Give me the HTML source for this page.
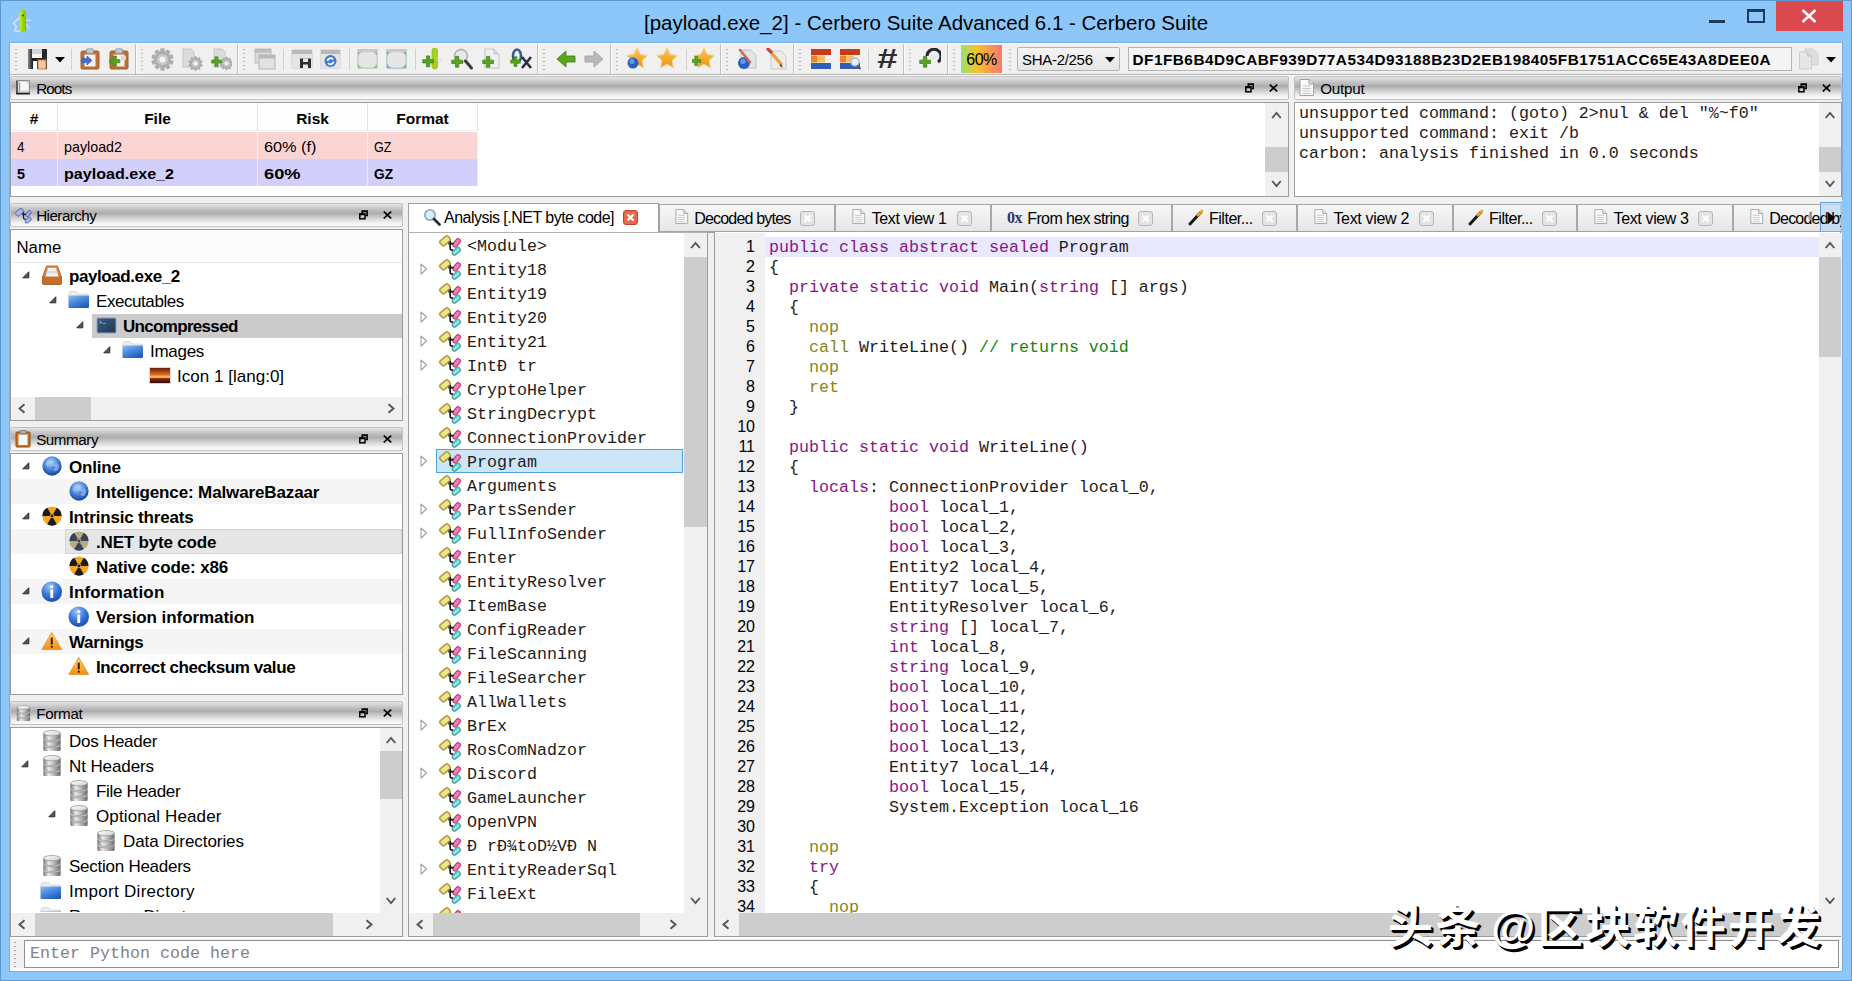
<!DOCTYPE html>
<html><head><meta charset="utf-8"><title>[payload.exe_2] - Cerbero Suite Advanced 6.1 - Cerbero Suite</title>
<style>
*{box-sizing:border-box;margin:0;padding:0}
html,body{width:1852px;height:981px;overflow:hidden}
body{background:#8dc7fa;font-family:"Liberation Sans",sans-serif;font-size:15px;color:#000;position:relative}
.abs{position:absolute}
.win{position:absolute;left:10px;top:43px;width:1832px;height:928px;background:#f0f0f0;outline:1px solid #7aaee2;border-top:1px solid #fafcff}
.dt{position:absolute;height:24px;border:1px solid #c2c2c2;border-radius:2px;background:linear-gradient(#e6e6e6 0%,#c8c8c8 20%,#acacac 42%,#d2d2d2 64%,#f2f2f2 86%,#fbfbfb 100%);font-size:15.200px;line-height:22.500px;white-space:nowrap}
.dt span{position:absolute;left:25.200px;top:1px}
.frame{position:absolute;background:#fff;border:1px solid #9c9c9c;overflow:hidden}
.sb{position:absolute;background:#f0f0f0}
.th{position:absolute;background:#cdcdcd}
.row{position:absolute;white-space:nowrap}
.mono{font-family:"Liberation Mono",monospace;font-size:16.67px;white-space:pre}
.mono{color:#1c1c1c}.kw{color:#861686}.op{color:#868616}.cm{color:#128612}
</style></head>
<body>
<div class="abs" style="left:0;top:0;width:1852px;height:981px;border:1px solid #5e97d2"></div>
<div class="abs" id="title" style="left:0;top:9px;width:1852px;text-align:center;font-size:20.5px;line-height:28px;white-space:nowrap">[payload.exe_2] - Cerbero Suite Advanced 6.1 - Cerbero Suite</div>
<svg class="abs" style="left:11px;top:8px" width="24" height="26" viewBox="0 0 24 26"><path d="M9 9L2.500 15.500l3 3-2 4 5.500 1" fill="none" stroke="#dfe9f4" stroke-width="1.500" opacity=".9"/><path d="M15 12.500l5-.5M15 16l3.500 4.500" stroke="#e6eef8" stroke-width="1.100" opacity=".85"/><defs><linearGradient id="apg" x1="0" x2="1"><stop offset="0" stop-color="#c4e83c"/><stop offset=".5" stop-color="#9cd800"/><stop offset="1" stop-color="#86bc00"/></linearGradient></defs><rect x="8.700" y="2" width="6.400" height="22" rx="3.200" fill="url(#apg)"/><circle cx="12" cy="7.500" r="1.100" fill="#3c5200"/></svg>
<div class="abs" style="left:1709px;top:20px;width:16px;height:3px;background:#1c3a5c"></div>
<div class="abs" style="left:1747px;top:9px;width:18px;height:14px;border:2px solid #1c3a5c;border-top-width:3px"></div>
<div class="abs" style="left:1776px;top:1px;width:67px;height:30px;background:#d9494f"></div>
<svg class="abs" style="left:1801px;top:9px" width="16" height="14" viewBox="0 0 16 14"><path d="M1.500 1l13 12M14.500 1l-13 12" stroke="#fff" stroke-width="2.600"/></svg>
<div class="win"></div>
<div class="abs" style="left:10px;top:74px;width:1832px;height:1px;background:#b4b4b4"></div>
<div class="abs" style="left:10px;top:75px;width:1832px;height:1px;background:#fdfdfd"></div>
<div class="abs" style="left:15px;top:47px;width:2px;height:25px;background:repeating-linear-gradient(#f0f0f0 0 2px,#b4b4b4 2px 3.500px,#f0f0f0 3.500px 4px)"></div>
<div class="abs" style="left:141px;top:47px;width:2px;height:25px;background:repeating-linear-gradient(#f0f0f0 0 2px,#b4b4b4 2px 3.500px,#f0f0f0 3.500px 4px)"></div>
<div class="abs" style="left:243px;top:47px;width:2px;height:25px;background:repeating-linear-gradient(#f0f0f0 0 2px,#b4b4b4 2px 3.500px,#f0f0f0 3.500px 4px)"></div>
<div class="abs" style="left:543px;top:47px;width:2px;height:25px;background:repeating-linear-gradient(#f0f0f0 0 2px,#b4b4b4 2px 3.500px,#f0f0f0 3.500px 4px)"></div>
<div class="abs" style="left:616px;top:47px;width:2px;height:25px;background:repeating-linear-gradient(#f0f0f0 0 2px,#b4b4b4 2px 3.500px,#f0f0f0 3.500px 4px)"></div>
<div class="abs" style="left:726px;top:47px;width:2px;height:25px;background:repeating-linear-gradient(#f0f0f0 0 2px,#b4b4b4 2px 3.500px,#f0f0f0 3.500px 4px)"></div>
<div class="abs" style="left:799px;top:47px;width:2px;height:25px;background:repeating-linear-gradient(#f0f0f0 0 2px,#b4b4b4 2px 3.500px,#f0f0f0 3.500px 4px)"></div>
<div class="abs" style="left:909px;top:47px;width:2px;height:25px;background:repeating-linear-gradient(#f0f0f0 0 2px,#b4b4b4 2px 3.500px,#f0f0f0 3.500px 4px)"></div>
<div class="abs" style="left:953px;top:47px;width:2px;height:25px;background:repeating-linear-gradient(#f0f0f0 0 2px,#b4b4b4 2px 3.500px,#f0f0f0 3.500px 4px)"></div>
<div class="abs" style="left:1009px;top:47px;width:2px;height:25px;background:repeating-linear-gradient(#f0f0f0 0 2px,#b4b4b4 2px 3.500px,#f0f0f0 3.500px 4px)"></div>
<div class="abs" style="left:135px;top:44px;width:1px;height:30px;background:#c0c0c0"></div><div class="abs" style="left:136px;top:44px;width:1px;height:30px;background:#fcfcfc"></div>
<div class="abs" style="left:237px;top:44px;width:1px;height:30px;background:#c0c0c0"></div><div class="abs" style="left:238px;top:44px;width:1px;height:30px;background:#fcfcfc"></div>
<div class="abs" style="left:537px;top:44px;width:1px;height:30px;background:#c0c0c0"></div><div class="abs" style="left:538px;top:44px;width:1px;height:30px;background:#fcfcfc"></div>
<div class="abs" style="left:610px;top:44px;width:1px;height:30px;background:#c0c0c0"></div><div class="abs" style="left:611px;top:44px;width:1px;height:30px;background:#fcfcfc"></div>
<div class="abs" style="left:720px;top:44px;width:1px;height:30px;background:#c0c0c0"></div><div class="abs" style="left:721px;top:44px;width:1px;height:30px;background:#fcfcfc"></div>
<div class="abs" style="left:793px;top:44px;width:1px;height:30px;background:#c0c0c0"></div><div class="abs" style="left:794px;top:44px;width:1px;height:30px;background:#fcfcfc"></div>
<div class="abs" style="left:903px;top:44px;width:1px;height:30px;background:#c0c0c0"></div><div class="abs" style="left:904px;top:44px;width:1px;height:30px;background:#fcfcfc"></div>
<div class="abs" style="left:947px;top:44px;width:1px;height:30px;background:#c0c0c0"></div><div class="abs" style="left:948px;top:44px;width:1px;height:30px;background:#fcfcfc"></div>
<div class="abs" style="left:71px;top:49px;width:1px;height:21px;background:#d0d0d0"></div>
<div class="abs" style="left:283px;top:49px;width:1px;height:21px;background:#d0d0d0"></div>
<div class="abs" style="left:349px;top:49px;width:1px;height:21px;background:#d0d0d0"></div>
<div class="abs" style="left:415px;top:49px;width:1px;height:21px;background:#d0d0d0"></div>
<div class="abs" style="left:686px;top:49px;width:1px;height:21px;background:#d0d0d0"></div>
<div class="abs" style="left:868px;top:49px;width:1px;height:21px;background:#d0d0d0"></div>
<svg class="abs" style="left:27px;top:48px" width="21" height="22" viewBox="0 0 21 22"><defs><linearGradient id="flp" x1="0" x2="1"><stop offset="0" stop-color="#8a8a8a"/><stop offset=".25" stop-color="#1a1a1a"/><stop offset="1" stop-color="#2a2a2a"/></linearGradient></defs><path d="M1 1h19v20H1z" fill="url(#flp)"/><rect x="5" y="1" width="10" height="8" fill="#d4d4d4"/><rect x="5" y="6" width="10" height="4" fill="#f4f4f4"/><rect x="11" y="12" width="8" height="9" fill="#f0c8a8" stroke="#c87a3a" stroke-width="1"/><rect x="6" y="13" width="4" height="8" fill="#fafafa"/></svg>
<svg class="abs" style="left:55px;top:57px" width="10" height="6" viewBox="0 0 10 6"><path d="M0 0h10L5 5.500z" fill="#000"/></svg>
<svg class="abs" style="left:80px;top:48px" width="20" height="22" viewBox="0 0 20 22"><rect x="1" y="3" width="18" height="18" rx="1.500" fill="#b9733a" stroke="#9a5e26"/><rect x="4.500" y="6.500" width="11" height="12" fill="#f4f0ec"/><rect x="6.500" y=".8" width="7" height="4.500" rx="1.200" fill="#c0c8d0" stroke="#8a98a8" stroke-width=".8"/><path d="M2 10.500h5V8l5 4.500-5 4.500v-2.500H2z" fill="#3f6fd6" stroke="#3058b0" stroke-width=".6"/></svg>
<svg class="abs" style="left:109px;top:48px" width="20" height="22" viewBox="0 0 20 22"><rect x="1" y="3" width="18" height="18" rx="1.500" fill="#b9733a" stroke="#9a5e26"/><rect x="4.500" y="6.500" width="11" height="12" fill="#f4f0ec"/><rect x="6.500" y=".8" width="7" height="4.500" rx="1.200" fill="#c0c8d0" stroke="#8a98a8" stroke-width=".8"/><path d="M1 13h5v-5h4.500v5h5v4.500h-5v5h-4.500v-5h-5z" transform="translate(0 2.5) scale(0.7020000000000001)" fill="#58a224" stroke="#3f7f14" stroke-width="1"/><rect x="12" y="8" width="5" height="4" fill="#d8d8d8"/></svg>
<svg class="abs" style="left:151px;top:48px" width="23" height="23" viewBox="0 0 23 23"><rect x="9.3" y="0.29999999999999893" width="4.4" height="5.0" rx="1" fill="#aeaeae" transform="rotate(0 11.5 11.5)"/><rect x="9.3" y="0.29999999999999893" width="4.4" height="5.0" rx="1" fill="#aeaeae" transform="rotate(36 11.5 11.5)"/><rect x="9.3" y="0.29999999999999893" width="4.4" height="5.0" rx="1" fill="#aeaeae" transform="rotate(72 11.5 11.5)"/><rect x="9.3" y="0.29999999999999893" width="4.4" height="5.0" rx="1" fill="#aeaeae" transform="rotate(108 11.5 11.5)"/><rect x="9.3" y="0.29999999999999893" width="4.4" height="5.0" rx="1" fill="#aeaeae" transform="rotate(144 11.5 11.5)"/><rect x="9.3" y="0.29999999999999893" width="4.4" height="5.0" rx="1" fill="#aeaeae" transform="rotate(180 11.5 11.5)"/><rect x="9.3" y="0.29999999999999893" width="4.4" height="5.0" rx="1" fill="#aeaeae" transform="rotate(216 11.5 11.5)"/><rect x="9.3" y="0.29999999999999893" width="4.4" height="5.0" rx="1" fill="#aeaeae" transform="rotate(252 11.5 11.5)"/><rect x="9.3" y="0.29999999999999893" width="4.4" height="5.0" rx="1" fill="#aeaeae" transform="rotate(288 11.5 11.5)"/><rect x="9.3" y="0.29999999999999893" width="4.4" height="5.0" rx="1" fill="#aeaeae" transform="rotate(324 11.5 11.5)"/><circle cx="11.5" cy="11.5" r="8.5" fill="#aeaeae"/><circle cx="11.5" cy="11.5" r="5.5" fill="#c8c8c8"/><circle cx="11.5" cy="11.5" r="3.0" fill="#f4f4f4"/></svg>
<svg class="abs" style="left:182px;top:48px" width="21" height="23" viewBox="0 0 21 23"><path d="M1 1h8l3 3v15H1z" fill="#dcdcdc" stroke="#c4c4c4"/><rect x="12.07" y="8.219999999999999" width="2.86" height="3.25" rx="1" fill="#aeaeae" transform="rotate(0 13.5 15.5)"/><rect x="12.07" y="8.219999999999999" width="2.86" height="3.25" rx="1" fill="#aeaeae" transform="rotate(36 13.5 15.5)"/><rect x="12.07" y="8.219999999999999" width="2.86" height="3.25" rx="1" fill="#aeaeae" transform="rotate(72 13.5 15.5)"/><rect x="12.07" y="8.219999999999999" width="2.86" height="3.25" rx="1" fill="#aeaeae" transform="rotate(108 13.5 15.5)"/><rect x="12.07" y="8.219999999999999" width="2.86" height="3.25" rx="1" fill="#aeaeae" transform="rotate(144 13.5 15.5)"/><rect x="12.07" y="8.219999999999999" width="2.86" height="3.25" rx="1" fill="#aeaeae" transform="rotate(180 13.5 15.5)"/><rect x="12.07" y="8.219999999999999" width="2.86" height="3.25" rx="1" fill="#aeaeae" transform="rotate(216 13.5 15.5)"/><rect x="12.07" y="8.219999999999999" width="2.86" height="3.25" rx="1" fill="#aeaeae" transform="rotate(252 13.5 15.5)"/><rect x="12.07" y="8.219999999999999" width="2.86" height="3.25" rx="1" fill="#aeaeae" transform="rotate(288 13.5 15.5)"/><rect x="12.07" y="8.219999999999999" width="2.86" height="3.25" rx="1" fill="#aeaeae" transform="rotate(324 13.5 15.5)"/><circle cx="13.5" cy="15.5" r="5.5249999999999995" fill="#aeaeae"/><circle cx="13.5" cy="15.5" r="3.575" fill="#c8c8c8"/><circle cx="13.5" cy="15.5" r="1.95" fill="#f4f4f4"/></svg>
<svg class="abs" style="left:211px;top:48px" width="21" height="23" viewBox="0 0 21 23"><path d="M3 1h8l3 3v15H3z" fill="#dcdcdc" stroke="#c4c4c4"/><rect x="14.18" y="8.78" width="2.64" height="3.0" rx="1" fill="#aeaeae" transform="rotate(0 15.5 15.5)"/><rect x="14.18" y="8.78" width="2.64" height="3.0" rx="1" fill="#aeaeae" transform="rotate(36 15.5 15.5)"/><rect x="14.18" y="8.78" width="2.64" height="3.0" rx="1" fill="#aeaeae" transform="rotate(72 15.5 15.5)"/><rect x="14.18" y="8.78" width="2.64" height="3.0" rx="1" fill="#aeaeae" transform="rotate(108 15.5 15.5)"/><rect x="14.18" y="8.78" width="2.64" height="3.0" rx="1" fill="#aeaeae" transform="rotate(144 15.5 15.5)"/><rect x="14.18" y="8.78" width="2.64" height="3.0" rx="1" fill="#aeaeae" transform="rotate(180 15.5 15.5)"/><rect x="14.18" y="8.78" width="2.64" height="3.0" rx="1" fill="#aeaeae" transform="rotate(216 15.5 15.5)"/><rect x="14.18" y="8.78" width="2.64" height="3.0" rx="1" fill="#aeaeae" transform="rotate(252 15.5 15.5)"/><rect x="14.18" y="8.78" width="2.64" height="3.0" rx="1" fill="#aeaeae" transform="rotate(288 15.5 15.5)"/><rect x="14.18" y="8.78" width="2.64" height="3.0" rx="1" fill="#aeaeae" transform="rotate(324 15.5 15.5)"/><circle cx="15.5" cy="15.5" r="5.1" fill="#aeaeae"/><circle cx="15.5" cy="15.5" r="3.3000000000000003" fill="#c8c8c8"/><circle cx="15.5" cy="15.5" r="1.7999999999999998" fill="#f4f4f4"/><path d="M1 13h5v-5h4.500v5h5v4.500h-5v5h-4.500v-5h-5z" transform="translate(0 3.5) scale(0.663)" fill="#58a224" stroke="#3f7f14" stroke-width="1"/></svg>
<svg class="abs" style="left:254px;top:48px" width="22" height="22" viewBox="0 0 22 22"><rect x="1" y="1" width="16" height="14" fill="#dadada" stroke="#bebebe"/><rect x="1" y="1" width="16" height="3.500" fill="#bcbcbc"/><rect x="5" y="7" width="16" height="14" fill="#e2e2e2" stroke="#b4b4b4"/><rect x="5" y="7" width="16" height="3.500" fill="#b8b8b8"/></svg>
<svg class="abs" style="left:291px;top:48px" width="22" height="22" viewBox="0 0 22 22"><rect x="1" y="2" width="20" height="18" fill="#f2f2f2" stroke="#c8c8c8"/><rect x="1" y="2" width="20" height="4" fill="#b8b8b8"/><rect x="1" y="6" width="20" height="14" fill="#e4e4e4"/><path d="M9 10.500h11v9.500H9z" fill="#2e2e2e"/><rect x="12" y="10.500" width="5" height="3.500" fill="#e8e8e8"/><rect x="12" y="16.500" width="5" height="3.500" fill="#e8e8e8"/></svg>
<svg class="abs" style="left:320px;top:48px" width="21" height="22" viewBox="0 0 21 22"><rect x="1" y="2" width="19" height="18" fill="#f2f2f2" stroke="#c8c8c8"/><rect x="1" y="2" width="19" height="4" fill="#b8b8b8"/><rect x="1" y="6" width="19" height="14" fill="#e4e4e4"/><circle cx="10.500" cy="13" r="6" fill="#3f78d4"/><path d="M7.500 13a3 3 0 0 1 5.500-1.500M13.500 13.500a3 3 0 0 1-5.500 1.500" fill="none" stroke="#fff" stroke-width="1.800"/></svg>
<svg class="abs" style="left:357px;top:48px" width="21" height="21" viewBox="0 0 21 21"><rect x=".5" y="1" width="20" height="19.500" fill="#8fc48f"/><rect x=".5" y="1" width="20" height="3" fill="#c8c8c8"/><rect x="1.500" y="4" width="18" height="15.500" rx="5" fill="#e6e6e6" stroke="#d8d8d8"/></svg>
<svg class="abs" style="left:386px;top:48px" width="21" height="21" viewBox="0 0 21 21"><rect x=".5" y="1" width="20" height="19.500" fill="#86aab8"/><rect x=".5" y="1" width="20" height="3" fill="#c8c8c8"/><rect x="1.500" y="4" width="18" height="15.500" rx="5" fill="#e6e6e6" stroke="#d8d8d8"/></svg>
<svg class="abs" style="left:422px;top:48px" width="22" height="23" viewBox="0 0 22 23"><rect x="10" y="0" width="5.500" height="21" rx="2.500" fill="#a8d020" stroke="#88b010" stroke-width=".6"/><path d="M15 10l5 2-4 3" fill="none" stroke="#e0e0e0" stroke-width="1.200"/><path d="M1 13h5v-5h4.500v5h5v4.500h-5v5h-4.500v-5h-5z" transform="translate(0 2.0) scale(0.741)" fill="#58a224" stroke="#3f7f14" stroke-width="1"/></svg>
<svg class="abs" style="left:451px;top:48px" width="23" height="23" viewBox="0 0 23 23"><circle cx="10" cy="8" r="6.500" fill="#e8e8e8" stroke="#b8b8b8" stroke-width="1.800"/><path d="M14.500 13l6 7" stroke="#3a3a3a" stroke-width="3" stroke-linecap="round"/><path d="M1 13h5v-5h4.500v5h5v4.500h-5v5h-4.500v-5h-5z" transform="translate(0 2.5) scale(0.741)" fill="#58a224" stroke="#3f7f14" stroke-width="1"/></svg>
<svg class="abs" style="left:482px;top:48px" width="20" height="23" viewBox="0 0 20 23"><path d="M3 1h9l5 5v14H3z" fill="#f0f0f0" stroke="#c4c4c4"/><path d="M12 1v5h5" fill="#d8d8d8" stroke="#c4c4c4"/><path d="M1 13h5v-5h4.500v5h5v4.500h-5v5h-4.500v-5h-5z" transform="translate(0 2.5) scale(0.741)" fill="#58a224" stroke="#3f7f14" stroke-width="1"/></svg>
<svg class="abs" style="left:510px;top:48px" width="23" height="23" viewBox="0 0 23 23"><ellipse cx="7" cy="8" rx="4" ry="6.500" fill="none" stroke="#3a5a8a" stroke-width="2.600"/><path d="M12 9l9 11M21 9l-9 11" stroke="#2a2a4a" stroke-width="2.600"/><path d="M1 13h5v-5h4.500v5h5v4.500h-5v5h-4.500v-5h-5z" transform="translate(0 3.5) scale(0.663)" fill="#58a224" stroke="#3f7f14" stroke-width="1"/></svg>
<svg class="abs" style="left:556px;top:49px" width="20" height="20" viewBox="0 0 20 20"><path d="M1 10L10 2v5h9v6h-9v5z" fill="#5aa81a" stroke="#3a7a0a" stroke-width=".8"/></svg>
<svg class="abs" style="left:584px;top:49px" width="20" height="20" viewBox="0 0 20 20"><path d="M19 10L10 2v5H1v6h9v5z" fill="#b8b8b8" stroke="#a0a0a0" stroke-width=".8"/></svg>
<svg class="abs" style="left:626px;top:47px" width="23" height="23" viewBox="0 0 23 23"><defs><linearGradient id="stg" x1="0" y1="0" x2="0" y2="1"><stop offset="0" stop-color="#fbc652"/><stop offset="1" stop-color="#ef920e"/></linearGradient></defs><path d="M11 1l3.100 6.600 7.200.9-5.300 5 1.400 7.200L11 17.100 4.600 20.700 6 13.500.7 8.500l7.200-.9z" fill="url(#stg)" stroke="#f3cf8a" stroke-width="1" stroke-linejoin="round"/><circle cx="7" cy="16" r="5.500" fill="#2a60c0"/><circle cx="6" cy="14.500" r="2.500" fill="#6a9ae0"/></svg>
<svg class="abs" style="left:656px;top:47px" width="23" height="23" viewBox="0 0 23 23"><defs><linearGradient id="stg" x1="0" y1="0" x2="0" y2="1"><stop offset="0" stop-color="#fbc652"/><stop offset="1" stop-color="#ef920e"/></linearGradient></defs><path d="M11 1l3.100 6.600 7.200.9-5.300 5 1.400 7.200L11 17.100 4.600 20.700 6 13.500.7 8.500l7.200-.9z" fill="url(#stg)" stroke="#f3cf8a" stroke-width="1" stroke-linejoin="round"/></svg>
<svg class="abs" style="left:692px;top:47px" width="23" height="23" viewBox="0 0 23 23"><g transform="translate(1 0)"><defs><linearGradient id="stg" x1="0" y1="0" x2="0" y2="1"><stop offset="0" stop-color="#fbc652"/><stop offset="1" stop-color="#ef920e"/></linearGradient></defs><path d="M11 1l3.100 6.600 7.200.9-5.300 5 1.400 7.200L11 17.100 4.600 20.700 6 13.500.7 8.500l7.200-.9z" fill="url(#stg)" stroke="#f3cf8a" stroke-width="1" stroke-linejoin="round"/></g><path d="M1 13h5v-5h4.500v5h5v4.500h-5v5h-4.500v-5h-5z" transform="translate(-1 4.5) scale(0.6240000000000001)" fill="#58a224" stroke="#3f7f14" stroke-width="1"/></svg>
<svg class="abs" style="left:737px;top:48px" width="21" height="22" viewBox="0 0 21 22"><path d="M4 2h10l5 5v13H4z" fill="#e4e4e4" stroke="#c0c0c0"/><circle cx="7" cy="15" r="6" fill="#2a60c0"/><circle cx="6" cy="13.500" r="2.600" fill="#6a9ae0"/><path d="M3 2l10 12" stroke="#d06a5a" stroke-width="2.600" stroke-linecap="round"/></svg>
<svg class="abs" style="left:766px;top:48px" width="22" height="22" viewBox="0 0 22 22"><path d="M5 3h10l5 5v13H5z" fill="#ececec" stroke="#c8c8c8"/><path d="M3 2l12 14" stroke="#e8a050" stroke-width="3.400" stroke-linecap="round"/><path d="M2 1l3 3" stroke="#d04a4a" stroke-width="3.400" stroke-linecap="round"/><path d="M15 16l2 3.500-3.500-1.500z" fill="#3a3a3a"/></svg>
<svg class="abs" style="left:810px;top:48px" width="22" height="22" viewBox="0 0 22 22"><rect x="1" y="1" width="20" height="6" fill="#c63a1e"/><rect x="1" y="7.500" width="6" height="7" fill="#ee8422"/><rect x="7" y="7.500" width="8" height="7" fill="#f6bd6a"/><rect x="1" y="15" width="20" height="6" fill="#2f5fb8"/></svg>
<svg class="abs" style="left:839px;top:48px" width="22" height="22" viewBox="0 0 22 22"><rect x="1" y="1" width="20" height="6" fill="#c63a1e"/><rect x="1" y="7.500" width="6" height="7" fill="#ee8422"/><rect x="7" y="7.500" width="8" height="7" fill="#f6bd6a"/><rect x="1" y="15" width="20" height="6" fill="#2f5fb8"/><circle cx="16" cy="14" r="4" fill="#e8f0f8" stroke="#a8b8c8" stroke-width="1.400"/><path d="M18.500 17.500l3 3.500" stroke="#5a5a5a" stroke-width="2"/></svg>
<div class="abs" style="left:875px;top:43px;width:24px;text-align:center;font-size:27px;font-weight:bold;font-style:italic;line-height:32px;color:#303030;transform:scale(1.35,1.05)">#</div>
<svg class="abs" style="left:919px;top:48px" width="22" height="22" viewBox="0 0 22 22"><path d="M19 14a7 7 0 1 0-11-6" fill="none" stroke="#2a2a2a" stroke-width="3"/><ellipse cx="14" cy="9" rx="4" ry="3" fill="#e8e8e8"/><path d="M1 13h5v-5h4.500v5h5v4.500h-5v5h-4.500v-5h-5z" transform="translate(0 2.5) scale(0.741)" fill="#58a224" stroke="#3f7f14" stroke-width="1"/></svg>
<div class="abs" style="left:961px;top:45px;width:41px;height:28px;background:linear-gradient(90deg,#9be070 0%,#f5c22a 40%,#f79a50 70%,#f47a6a 100%);text-align:center;font-size:16px;line-height:29px;letter-spacing:-.5px">60%</div>
<div class="abs" style="left:1017px;top:47px;width:103px;height:24px;background:linear-gradient(#f4f4f4,#e6e6e6);border:1px solid #b4b4b4;border-radius:2px;font-size:15px;line-height:23px;padding-left:4px;letter-spacing:-.3px" id="sha">SHA-2/256</div>
<svg class="abs" style="left:1105px;top:57px" width="10" height="6" viewBox="0 0 10 6"><path d="M0 0h10L5 5.500z" fill="#000"/></svg>
<div class="abs" id="hash" style="left:1128px;top:47px;width:664px;height:24px;background:#f4f4f4;border:1px solid #b4b4b4;font-size:15.300px;font-weight:bold;line-height:23.500px;padding-left:3.500px;white-space:nowrap;letter-spacing:0.517px">DF1FB6B4D9CABF939D77A534D93188B23D2EB198405FB1751ACC65E43A8DEE0A</div>
<svg class="abs" style="left:1798px;top:48px" width="22" height="22" viewBox="0 0 22 22"><path d="M7 1h8l5 5v11H7z" fill="#dedede" stroke="#cfcfcf"/><path d="M1.500 4h8l4 4v13h-12z" fill="#e6e6e6" stroke="#cdcdcd"/><path d="M9.500 4v4h4" fill="#d0d0d0" stroke="#c4c4c4"/></svg>
<svg class="abs" style="left:1826px;top:57px" width="10" height="6" viewBox="0 0 10 6"><path d="M0 0h10L5 5.500z" fill="#000"/></svg>
<div class="dt" style="left:10px;top:76px;width:1279px"><span style="letter-spacing:-0.897px">Roots</span></div>
<svg class="abs" style="left:16px;top:80px" width="14" height="15" viewBox="0 0 14 15"><rect x=".5" y=".5" width="13" height="13" fill="#d4d4d4" stroke="#8c8c8c"/><path d="M4.500 2h5.500l2.500 2.500v6h-8z" fill="#f6f6f6"/><path d="M1 1v12.500" stroke="#4a4a4a" stroke-width="1.600"/><path d="M.2 13.600h13.600" stroke="#1e1e1e" stroke-width="1.800"/><path d="M3.500 3v8" stroke="#9a9a9a" stroke-width="1"/></svg>
<svg class="abs" style="left:1245px;top:83px" width="9" height="10" viewBox="0 0 9 10"><path d="M3.200 3V.9h5v4.600H6.500M3.200 1.400h5" fill="none" stroke="#000" stroke-width="1.500"/><rect x=".8" y="3.800" width="5.200" height="5" fill="none" stroke="#000" stroke-width="1.500"/><path d="M.8 4.500h5.200" stroke="#000" stroke-width="1.500"/></svg><svg class="abs" style="left:1269px;top:84px" width="9" height="8" viewBox="0 0 9 8"><path d="M.8 .6l7.400 6.800M8.200 .6L.8 7.400" stroke="#000" stroke-width="1.700"/></svg>
<div class="dt" style="left:1294px;top:76px;width:548px"><span style="letter-spacing:-0.199px">Output</span></div>
<svg class="abs" style="left:1299px;top:79px" width="16" height="18" viewBox="0 0 16 18"><path d="M1 .5h9l4.500 4.500v11.500H1z" fill="#fafafa" stroke="#a0a0a0" stroke-width="1"/><path d="M10 .5v4.500h4.500" fill="#e0e0e0" stroke="#a0a0a0" stroke-width="1"/><path d="M3.500 7h8M3.500 9.500h8M3.500 12h8M3.500 14.500h8" stroke="#c4c4c4" stroke-width="1"/></svg>
<svg class="abs" style="left:1798px;top:83px" width="9" height="10" viewBox="0 0 9 10"><path d="M3.200 3V.9h5v4.600H6.500M3.200 1.400h5" fill="none" stroke="#000" stroke-width="1.500"/><rect x=".8" y="3.800" width="5.200" height="5" fill="none" stroke="#000" stroke-width="1.500"/><path d="M.8 4.500h5.200" stroke="#000" stroke-width="1.500"/></svg><svg class="abs" style="left:1822px;top:84px" width="9" height="8" viewBox="0 0 9 8"><path d="M.8 .6l7.400 6.800M8.200 .6L.8 7.400" stroke="#000" stroke-width="1.700"/></svg>
<div class="dt" style="left:10px;top:203px;width:393px"><span style="letter-spacing:-0.537px">Hierarchy</span></div>
<svg class="abs" style="left:15px;top:207px" width="18" height="17" viewBox="0 0 18 17"><g transform="scale(.76)"><rect x="0.800" y="3.700" width="10.500" height="6.300" rx="2" transform="rotate(-40 6 6.800)" fill="#a9b8e6" stroke="#6a7cb8" stroke-width="1.500"/><rect x="13.200" y="6.500" width="9" height="4.600" rx="2.200" transform="rotate(-52 17.700 8.800)" fill="#9aaae0" stroke="#6274b4" stroke-width="1.300"/><rect x="12.800" y="15" width="9" height="4.600" rx="2.200" transform="rotate(-40 17.300 17.300)" fill="#a4b6ea" stroke="#6a7cb8" stroke-width="1.300"/><path d="M11.200 7v7.300q0 1.700 1.700 1.700h1.300M9.300 9.600h5.200" fill="none" stroke="#1a1a1a" stroke-width="1.700"/></g></svg>
<svg class="abs" style="left:359px;top:210px" width="9" height="10" viewBox="0 0 9 10"><path d="M3.200 3V.9h5v4.600H6.500M3.200 1.400h5" fill="none" stroke="#000" stroke-width="1.500"/><rect x=".8" y="3.800" width="5.200" height="5" fill="none" stroke="#000" stroke-width="1.500"/><path d="M.8 4.500h5.200" stroke="#000" stroke-width="1.500"/></svg><svg class="abs" style="left:383px;top:211px" width="9" height="8" viewBox="0 0 9 8"><path d="M.8 .6l7.400 6.800M8.200 .6L.8 7.400" stroke="#000" stroke-width="1.700"/></svg>
<div class="dt" style="left:10px;top:427px;width:393px"><span style="letter-spacing:-0.447px">Summary</span></div>
<svg class="abs" style="left:15px;top:430px" width="17" height="18" viewBox="0 0 17 18"><rect x="1" y="2" width="14" height="15" rx="1" fill="#c8742a" stroke="#8a4a14"/><rect x="3.500" y="4.500" width="9" height="10.500" fill="#f8f8f8"/><rect x="5" y=".5" width="6" height="3.500" rx="1" fill="#b0b0b0" stroke="#707070" stroke-width=".8"/></svg>
<svg class="abs" style="left:359px;top:434px" width="9" height="10" viewBox="0 0 9 10"><path d="M3.200 3V.9h5v4.600H6.500M3.200 1.400h5" fill="none" stroke="#000" stroke-width="1.500"/><rect x=".8" y="3.800" width="5.200" height="5" fill="none" stroke="#000" stroke-width="1.500"/><path d="M.8 4.500h5.200" stroke="#000" stroke-width="1.500"/></svg><svg class="abs" style="left:383px;top:435px" width="9" height="8" viewBox="0 0 9 8"><path d="M.8 .6l7.400 6.800M8.200 .6L.8 7.400" stroke="#000" stroke-width="1.700"/></svg>
<div class="dt" style="left:10px;top:701px;width:393px"><span style="letter-spacing:-0.302px">Format</span></div>
<svg class="abs" style="left:15.5px;top:704.5px" width="15" height="16" viewBox="0 0 18 21"><defs><linearGradient id="dbg" x1="0" y1="0" x2="1" y2="0"><stop offset="0" stop-color="#7a7a7a"/><stop offset=".3" stop-color="#ececec"/><stop offset=".55" stop-color="#c4c4c4"/><stop offset="1" stop-color="#6c6c6c"/></linearGradient><linearGradient id="dbt" x1="0" y1="0" x2="1" y2="1"><stop offset="0" stop-color="#ffffff"/><stop offset="1" stop-color="#cfcfcf"/></linearGradient></defs><path d="M.6 15.2v4.600a8.400 2.700 0 0 0 16.800 0v-4.600z" fill="url(#dbg)" stroke="#767676" stroke-width=".5"/><ellipse cx="9" cy="15.2" rx="8.400" ry="2.700" fill="url(#dbt)" stroke="#8c8c8c" stroke-width=".7"/><path d="M.6 9.2v4.600a8.400 2.700 0 0 0 16.800 0v-4.600z" fill="url(#dbg)" stroke="#767676" stroke-width=".5"/><ellipse cx="9" cy="9.2" rx="8.400" ry="2.700" fill="url(#dbt)" stroke="#8c8c8c" stroke-width=".7"/><path d="M.6 3.2v4.600a8.400 2.700 0 0 0 16.800 0v-4.600z" fill="url(#dbg)" stroke="#767676" stroke-width=".5"/><ellipse cx="9" cy="3.2" rx="8.400" ry="2.700" fill="url(#dbt)" stroke="#8c8c8c" stroke-width=".7"/></svg>
<svg class="abs" style="left:359px;top:708px" width="9" height="10" viewBox="0 0 9 10"><path d="M3.200 3V.9h5v4.600H6.500M3.200 1.400h5" fill="none" stroke="#000" stroke-width="1.500"/><rect x=".8" y="3.800" width="5.200" height="5" fill="none" stroke="#000" stroke-width="1.500"/><path d="M.8 4.500h5.200" stroke="#000" stroke-width="1.500"/></svg><svg class="abs" style="left:383px;top:709px" width="9" height="8" viewBox="0 0 9 8"><path d="M.8 .6l7.400 6.800M8.200 .6L.8 7.400" stroke="#000" stroke-width="1.700"/></svg>
<div class="frame" style="left:10px;top:102px;width:1279px;height:95px"></div>
<div class="abs" style="left:11px;top:103px;width:467px;height:28px;background:#fdfdfd;border-bottom:1px solid #ededed"></div>
<div class="abs" style="left:11px;top:103px;width:47px;height:28px;border-right:1px solid #e4e4e4;text-align:center;font-weight:bold;font-size:15.5px;line-height:31.500px">#</div>
<div class="abs" style="left:58px;top:103px;width:200px;height:28px;border-right:1px solid #e4e4e4;text-align:center;font-weight:bold;font-size:15.5px;line-height:31.500px">File</div>
<div class="abs" style="left:258px;top:103px;width:110px;height:28px;border-right:1px solid #e4e4e4;text-align:center;font-weight:bold;font-size:15.5px;line-height:31.500px">Risk</div>
<div class="abs" style="left:368px;top:103px;width:110px;height:28px;border-right:1px solid #e4e4e4;text-align:center;font-weight:bold;font-size:15.5px;line-height:31.500px">Format</div>
<div class="abs" style="left:11px;top:132px;width:467px;height:27px;background:#fbd4d4"></div>
<div class="abs" style="left:11px;top:132px;width:47px;height:27px;border-right:1px solid rgba(255,255,255,.55);padding-left:5.500px;font-weight:normal;font-size:15px;line-height:29.500px;white-space:nowrap"><span style="display:inline-block;transform-origin:0 50%;transform:scaleX(0.8989)">4</span></div>
<div class="abs" style="left:58px;top:132px;width:200px;height:27px;border-right:1px solid rgba(255,255,255,.55);padding-left:5.500px;font-weight:normal;font-size:15px;line-height:29.500px;white-space:nowrap"><span style="display:inline-block;transform-origin:0 50%;transform:scaleX(0.9525)">payload2</span></div>
<div class="abs" style="left:258px;top:132px;width:110px;height:27px;border-right:1px solid rgba(255,255,255,.55);padding-left:5.500px;font-weight:normal;font-size:15px;line-height:29.500px;white-space:nowrap"><span style="display:inline-block;transform-origin:0 50%;transform:scaleX(1.0856)">60% (f)</span></div>
<div class="abs" style="left:368px;top:132px;width:110px;height:27px;border-right:1px solid rgba(255,255,255,.55);padding-left:5.500px;font-weight:normal;font-size:15px;line-height:29.500px;white-space:nowrap"><span style="display:inline-block;transform-origin:0 50%;transform:scaleX(0.8396)">GZ</span></div>
<div class="abs" style="left:11px;top:159px;width:467px;height:27px;background:#d2d0fa"></div>
<div class="abs" style="left:11px;top:159px;width:47px;height:27px;border-right:1px solid rgba(255,255,255,.55);padding-left:5.500px;font-weight:bold;font-size:15px;line-height:29.500px;white-space:nowrap"><span style="display:inline-block;transform-origin:0 50%;transform:scaleX(0.9588)">5</span></div>
<div class="abs" style="left:58px;top:159px;width:200px;height:27px;border-right:1px solid rgba(255,255,255,.55);padding-left:5.500px;font-weight:bold;font-size:15px;line-height:29.500px;white-space:nowrap"><span style="display:inline-block;transform-origin:0 50%;transform:scaleX(1.0725)">payload.exe_2</span></div>
<div class="abs" style="left:258px;top:159px;width:110px;height:27px;border-right:1px solid rgba(255,255,255,.55);padding-left:5.500px;font-weight:bold;font-size:15px;line-height:29.500px;white-space:nowrap"><span style="display:inline-block;transform-origin:0 50%;transform:scaleX(1.2154)">60%</span></div>
<div class="abs" style="left:368px;top:159px;width:110px;height:27px;border-right:1px solid rgba(255,255,255,.55);padding-left:5.500px;font-weight:bold;font-size:15px;line-height:29.500px;white-space:nowrap"><span style="display:inline-block;transform-origin:0 50%;transform:scaleX(0.9115)">GZ</span></div>
<div class="sb" style="left:1265px;top:103px;width:23px;height:93px"></div><div class="th" style="left:1265px;top:147px;width:23px;height:25px"></div><svg class="abs" style="left:1265px;top:103px" width="23" height="93"><polyline points="7.2,15.0 11.5,10.0 15.8,15.0" fill="none" stroke="#555" stroke-width="1.900"/><polyline points="7.2,78.0 11.5,83.0 15.8,78.0" fill="none" stroke="#555" stroke-width="1.900"/></svg>
<div class="frame" style="left:1294px;top:102px;width:548px;height:95px"></div>
<div class="row mono" style="left:1299px;top:104px;line-height:20px">unsupported command: (goto) 2&gt;nul &amp; del &quot;%~f0&quot;</div>
<div class="row mono" style="left:1299px;top:124px;line-height:20px">unsupported command: exit /b</div>
<div class="row mono" style="left:1299px;top:144px;line-height:20px">carbon: analysis finished in 0.0 seconds</div>
<div class="sb" style="left:1819px;top:103px;width:22px;height:93px"></div><div class="th" style="left:1819px;top:147px;width:22px;height:25px"></div><svg class="abs" style="left:1819px;top:103px" width="22" height="93"><polyline points="6.7,15.0 11.0,10.0 15.3,15.0" fill="none" stroke="#555" stroke-width="1.900"/><polyline points="6.7,78.0 11.0,83.0 15.3,78.0" fill="none" stroke="#555" stroke-width="1.900"/></svg>
<div class="frame" style="left:10px;top:229px;width:393px;height:192px"></div>
<div class="abs" style="left:11px;top:230px;width:391px;height:33px;background:#fcfcfc;border-bottom:1px solid #e8e8e8;font-size:16.800px;line-height:36px;padding-left:5.500px">Name</div>
<svg class="abs" style="left:21.5px;top:270.5px" width="8" height="8" viewBox="0 0 8 8"><path d="M6.800 .8V6.800H.8z" fill="#585858" stroke="#2c2c2c" stroke-width="1" stroke-linejoin="round"/></svg>
<svg class="abs" style="left:42px;top:265px" width="20" height="21" viewBox="0 0 20 21"><defs><linearGradient id="trg" x1="0" y1="0" x2="0" y2="1"><stop offset="0" stop-color="#e8964a"/><stop offset="1" stop-color="#b4601e"/></linearGradient></defs><path d="M4.500 1h11l4 11v6.500q0 1-1 1H1.500q-1 0-1-1V12z" fill="url(#trg)" stroke="#a25618" stroke-width=".8"/><path d="M6 3h8l2.500 8.500h-13z" fill="#f6f2ee"/><path d="M5 6h10l.8 2.500H4.200z" fill="#d8dce4"/><path d="M1 12h5l1 2h6l1-2h5v6.500H1z" fill="#c86e26"/></svg>
<div class="row" style="left:69px;top:264px;font-size:17px;font-weight:bold;line-height:25px;letter-spacing:-0.421px">payload.exe_2</div>
<svg class="abs" style="left:48.5px;top:295.5px" width="8" height="8" viewBox="0 0 8 8"><path d="M6.800 .8V6.800H.8z" fill="#585858" stroke="#2c2c2c" stroke-width="1" stroke-linejoin="round"/></svg>
<svg class="abs" style="left:67.5px;top:290px" width="22" height="19" viewBox="0 0 22 19"><path d="M1 3.500q0-2 2-2h5.500l2 2.500h9.500v5H1z" fill="#ececec" stroke="#cfcfcf" stroke-width=".7"/><defs><linearGradient id="fg" x1="0" y1="0" x2=".6" y2="1"><stop offset="0" stop-color="#8fc0f0"/><stop offset=".5" stop-color="#4a8ade"/><stop offset="1" stop-color="#2260b8"/></linearGradient></defs><path d="M.5 5.500h20.500v11.500q0 1-1 1H1.500q-1 0-1-1z" fill="url(#fg)"/></svg>
<div class="row" style="left:96px;top:289px;font-size:17px;font-weight:normal;line-height:25px;letter-spacing:-0.433px">Executables</div>
<div class="abs" style="left:92px;top:313.5px;width:310px;height:24.500px;background:#cbcbcb"></div>
<svg class="abs" style="left:75.5px;top:320.5px" width="8" height="8" viewBox="0 0 8 8"><path d="M6.800 .8V6.800H.8z" fill="#585858" stroke="#2c2c2c" stroke-width="1" stroke-linejoin="round"/></svg>
<svg class="abs" style="left:95.5px;top:317px" width="21" height="17" viewBox="0 0 21 17"><defs><linearGradient id="tg" x1="0" y1="0" x2="1" y2="1"><stop offset="0" stop-color="#3d5f8a"/><stop offset="1" stop-color="#1d3554"/></linearGradient></defs><rect x="1" y="1" width="19" height="15" rx="1" fill="url(#tg)" stroke="#8ea2ba" stroke-width="1"/><path d="M3.500 4l2 1.300-2 1.300M6.500 6.500h3" stroke="#b8c8dc" stroke-width=".7" fill="none"/></svg>
<div class="row" style="left:123px;top:314px;font-size:17px;font-weight:bold;line-height:25px;letter-spacing:-0.684px">Uncompressed</div>
<svg class="abs" style="left:102.5px;top:345.5px" width="8" height="8" viewBox="0 0 8 8"><path d="M6.800 .8V6.800H.8z" fill="#585858" stroke="#2c2c2c" stroke-width="1" stroke-linejoin="round"/></svg>
<svg class="abs" style="left:121.5px;top:340px" width="22" height="19" viewBox="0 0 22 19"><path d="M1 3.500q0-2 2-2h5.500l2 2.500h9.500v5H1z" fill="#ececec" stroke="#cfcfcf" stroke-width=".7"/><defs><linearGradient id="fg" x1="0" y1="0" x2=".6" y2="1"><stop offset="0" stop-color="#8fc0f0"/><stop offset=".5" stop-color="#4a8ade"/><stop offset="1" stop-color="#2260b8"/></linearGradient></defs><path d="M.5 5.500h20.500v11.500q0 1-1 1H1.500q-1 0-1-1z" fill="url(#fg)"/></svg>
<div class="row" style="left:150px;top:339px;font-size:17px;font-weight:normal;line-height:25px;letter-spacing:-0.290px">Images</div>
<svg class="abs" style="left:149px;top:367px" width="22" height="17" viewBox="0 0 22 17"><defs><linearGradient id="sg" x1="0" y1="0" x2="0" y2="1"><stop offset="0" stop-color="#5a1a0a"/><stop offset=".45" stop-color="#e8661a"/><stop offset=".6" stop-color="#ffd07a"/><stop offset=".7" stop-color="#7a2a0a"/><stop offset="1" stop-color="#2a0a05"/></linearGradient></defs><rect x=".5" y=".5" width="21" height="16" fill="url(#sg)" stroke="#d8d8d8" stroke-width="1"/></svg>
<div class="row" style="left:177px;top:364px;font-size:17px;font-weight:normal;line-height:25px;letter-spacing:0.021px">Icon 1 [lang:0]</div>
<div class="sb" style="left:11px;top:397px;width:391px;height:23px"></div><div class="th" style="left:35px;top:397px;width:56px;height:23px"></div><svg class="abs" style="left:11px;top:397px" width="391" height="23"><polyline points="13.5,7.2 8.5,11.5 13.5,15.8" fill="none" stroke="#555" stroke-width="1.900"/><polyline points="377.5,7.2 382.5,11.5 377.5,15.8" fill="none" stroke="#555" stroke-width="1.900"/></svg>
<div class="frame" style="left:10px;top:453px;width:393px;height:242px"></div>
<svg class="abs" style="left:21.5px;top:461.5px" width="8" height="8" viewBox="0 0 8 8"><path d="M6.800 .8V6.800H.8z" fill="#585858" stroke="#2c2c2c" stroke-width="1" stroke-linejoin="round"/></svg>
<svg class="abs" style="left:42px;top:456px" width="20" height="20" viewBox="0 0 22 22"><defs><radialGradient id="gg" cx=".45" cy=".32" r=".75"><stop offset="0" stop-color="#b4d8fa"/><stop offset=".4" stop-color="#5a92e2"/><stop offset=".78" stop-color="#2254b4"/><stop offset="1" stop-color="#143682"/></radialGradient></defs><circle cx="11" cy="11" r="10.600" fill="url(#gg)"/><path d="M5 6q2.500-3 5.500-1.500l.5 3-2.500 1.500-1 3.500-3-2q-1-2.500.5-4.500zM13 9.500l3.500-1.500 2.500 3-1.500 5-3.500 1-1.500-3.500z" fill="#a4ccf6" opacity=".55"/><path d="M11.500 12.500h3" stroke="#1e4a9c" stroke-width="1" opacity=".8"/></svg>
<div class="row" style="left:69px;top:455px;font-size:17px;font-weight:bold;line-height:25px;letter-spacing:-0.201px">Online</div>
<div class="abs" style="left:11px;top:479px;width:391px;height:25px;background:#f5f5f5"></div>
<svg class="abs" style="left:69px;top:481px" width="20" height="20" viewBox="0 0 22 22"><defs><radialGradient id="gg" cx=".45" cy=".32" r=".75"><stop offset="0" stop-color="#b4d8fa"/><stop offset=".4" stop-color="#5a92e2"/><stop offset=".78" stop-color="#2254b4"/><stop offset="1" stop-color="#143682"/></radialGradient></defs><circle cx="11" cy="11" r="10.600" fill="url(#gg)"/><path d="M5 6q2.500-3 5.500-1.500l.5 3-2.500 1.500-1 3.500-3-2q-1-2.500.5-4.500zM13 9.500l3.500-1.500 2.500 3-1.500 5-3.500 1-1.500-3.500z" fill="#a4ccf6" opacity=".55"/><path d="M11.500 12.500h3" stroke="#1e4a9c" stroke-width="1" opacity=".8"/></svg>
<div class="row" style="left:96px;top:480px;font-size:17px;font-weight:bold;line-height:25px;letter-spacing:-0.129px">Intelligence: MalwareBazaar</div>
<svg class="abs" style="left:21.5px;top:511.5px" width="8" height="8" viewBox="0 0 8 8"><path d="M6.800 .8V6.800H.8z" fill="#585858" stroke="#2c2c2c" stroke-width="1" stroke-linejoin="round"/></svg>
<svg class="abs" style="left:42px;top:506px" width="20" height="20" viewBox="0 0 22 22"><circle cx="11" cy="11" r="10.500" fill="#f5a623"/><g transform="rotate(180 11 11)"><path d="M11 11L5.750 1.900A10.500 10.500 0 0 1 16.250 1.900z" fill="#1a1a1a"/><path d="M11 11L21.500 11A10.500 10.500 0 0 1 16.250 20.100z" fill="#1a1a1a" transform="rotate(0 11 11)"/><path d="M11 11L5.750 20.100A10.500 10.500 0 0 1 .5 11z" fill="#1a1a1a"/></g><circle cx="11" cy="11" r="2.600" fill="#f5a623"/><circle cx="11" cy="11" r="1.600" fill="#1a1a1a"/></svg>
<div class="row" style="left:69px;top:505px;font-size:17px;font-weight:bold;line-height:25px;letter-spacing:-0.178px">Intrinsic threats</div>
<div class="abs" style="left:11px;top:529px;width:391px;height:25px;background:#f5f5f5"></div>
<div class="abs" style="left:65px;top:529px;width:337px;height:25px;background:#e6e6e6;border:1px solid #d4d4d4"></div>
<svg class="abs" style="left:69px;top:531px" width="20" height="20" viewBox="0 0 22 22"><circle cx="11" cy="11" r="10.500" fill="#b8a884"/><g transform="rotate(180 11 11)"><path d="M11 11L5.750 1.900A10.500 10.500 0 0 1 16.250 1.900z" fill="#3a4450"/><path d="M11 11L21.500 11A10.500 10.500 0 0 1 16.250 20.100z" fill="#3a4450" transform="rotate(0 11 11)"/><path d="M11 11L5.750 20.100A10.500 10.500 0 0 1 .5 11z" fill="#3a4450"/></g><circle cx="11" cy="11" r="2.600" fill="#b8a884"/><circle cx="11" cy="11" r="1.600" fill="#3a4450"/></svg>
<div class="row" style="left:96px;top:530px;font-size:17px;font-weight:bold;line-height:25px;letter-spacing:-0.178px">.NET byte code</div>
<svg class="abs" style="left:69px;top:556px" width="20" height="20" viewBox="0 0 22 22"><circle cx="11" cy="11" r="10.500" fill="#f5a623"/><g transform="rotate(180 11 11)"><path d="M11 11L5.750 1.900A10.500 10.500 0 0 1 16.250 1.900z" fill="#1a1a1a"/><path d="M11 11L21.500 11A10.500 10.500 0 0 1 16.250 20.100z" fill="#1a1a1a" transform="rotate(0 11 11)"/><path d="M11 11L5.750 20.100A10.500 10.500 0 0 1 .5 11z" fill="#1a1a1a"/></g><circle cx="11" cy="11" r="2.600" fill="#f5a623"/><circle cx="11" cy="11" r="1.600" fill="#1a1a1a"/></svg>
<div class="row" style="left:96px;top:555px;font-size:17px;font-weight:bold;line-height:25px;letter-spacing:-0.126px">Native code: x86</div>
<div class="abs" style="left:11px;top:579px;width:391px;height:25px;background:#f5f5f5"></div>
<svg class="abs" style="left:21.5px;top:586.5px" width="8" height="8" viewBox="0 0 8 8"><path d="M6.800 .8V6.800H.8z" fill="#585858" stroke="#2c2c2c" stroke-width="1" stroke-linejoin="round"/></svg>
<svg class="abs" style="left:41px;top:581px" width="21.500" height="21.500" viewBox="0 0 22 22"><defs><radialGradient id="ig" cx=".4" cy=".25" r=".85"><stop offset="0" stop-color="#9cc4f5"/><stop offset=".55" stop-color="#2f6fd6"/><stop offset="1" stop-color="#1a3fa0"/></radialGradient></defs><circle cx="11" cy="11" r="10.500" fill="url(#ig)"/><circle cx="11" cy="5.800" r="1.700" fill="#fff"/><rect x="9.500" y="8.800" width="3" height="8.500" rx=".5" fill="#fff"/></svg>
<div class="row" style="left:69px;top:580px;font-size:17px;font-weight:bold;line-height:25px;letter-spacing:0.180px">Information</div>
<svg class="abs" style="left:68px;top:606px" width="21.500" height="21.500" viewBox="0 0 22 22"><defs><radialGradient id="ig" cx=".4" cy=".25" r=".85"><stop offset="0" stop-color="#9cc4f5"/><stop offset=".55" stop-color="#2f6fd6"/><stop offset="1" stop-color="#1a3fa0"/></radialGradient></defs><circle cx="11" cy="11" r="10.500" fill="url(#ig)"/><circle cx="11" cy="5.800" r="1.700" fill="#fff"/><rect x="9.500" y="8.800" width="3" height="8.500" rx=".5" fill="#fff"/></svg>
<div class="row" style="left:96px;top:605px;font-size:17px;font-weight:bold;line-height:25px;letter-spacing:-0.069px">Version information</div>
<div class="abs" style="left:11px;top:629px;width:391px;height:25px;background:#f5f5f5"></div>
<svg class="abs" style="left:21.5px;top:636.5px" width="8" height="8" viewBox="0 0 8 8"><path d="M6.800 .8V6.800H.8z" fill="#585858" stroke="#2c2c2c" stroke-width="1" stroke-linejoin="round"/></svg>
<svg class="abs" style="left:41px;top:631px" width="21.500" height="20" viewBox="0 0 22 21"><defs><linearGradient id="wg" x1="0" y1="0" x2="0" y2="1"><stop offset="0" stop-color="#ffd76a"/><stop offset="1" stop-color="#f08a1a"/></linearGradient></defs><path d="M11 1.500L21.500 19.500H.5z" fill="url(#wg)" stroke="#e89a2a" stroke-width="1" stroke-linejoin="round"/><rect x="10" y="7" width="2" height="7" fill="#2a1a00"/><rect x="10" y="15.500" width="2" height="2" fill="#2a1a00"/></svg>
<div class="row" style="left:69px;top:630px;font-size:17px;font-weight:bold;line-height:25px;letter-spacing:-0.290px">Warnings</div>
<svg class="abs" style="left:68px;top:656px" width="21.500" height="20" viewBox="0 0 22 21"><defs><linearGradient id="wg" x1="0" y1="0" x2="0" y2="1"><stop offset="0" stop-color="#ffd76a"/><stop offset="1" stop-color="#f08a1a"/></linearGradient></defs><path d="M11 1.500L21.500 19.500H.5z" fill="url(#wg)" stroke="#e89a2a" stroke-width="1" stroke-linejoin="round"/><rect x="10" y="7" width="2" height="7" fill="#2a1a00"/><rect x="10" y="15.500" width="2" height="2" fill="#2a1a00"/></svg>
<div class="row" style="left:96px;top:655px;font-size:17px;font-weight:bold;line-height:25px;letter-spacing:-0.401px">Incorrect checksum value</div>
<div class="frame" style="left:10px;top:727px;width:393px;height:210px"></div>
<div class="abs" style="left:11px;top:728px;width:368px;height:184px;overflow:hidden" id="fmt">
<svg class="abs" style="left:31.5px;top:2px" width="18" height="21" viewBox="0 0 18 21"><defs><linearGradient id="dbg" x1="0" y1="0" x2="1" y2="0"><stop offset="0" stop-color="#7a7a7a"/><stop offset=".3" stop-color="#ececec"/><stop offset=".55" stop-color="#c4c4c4"/><stop offset="1" stop-color="#6c6c6c"/></linearGradient><linearGradient id="dbt" x1="0" y1="0" x2="1" y2="1"><stop offset="0" stop-color="#ffffff"/><stop offset="1" stop-color="#cfcfcf"/></linearGradient></defs><path d="M.6 15.2v4.600a8.400 2.700 0 0 0 16.800 0v-4.600z" fill="url(#dbg)" stroke="#767676" stroke-width=".5"/><ellipse cx="9" cy="15.2" rx="8.400" ry="2.700" fill="url(#dbt)" stroke="#8c8c8c" stroke-width=".7"/><path d="M.6 9.2v4.600a8.400 2.700 0 0 0 16.800 0v-4.600z" fill="url(#dbg)" stroke="#767676" stroke-width=".5"/><ellipse cx="9" cy="9.2" rx="8.400" ry="2.700" fill="url(#dbt)" stroke="#8c8c8c" stroke-width=".7"/><path d="M.6 3.2v4.600a8.400 2.700 0 0 0 16.800 0v-4.600z" fill="url(#dbg)" stroke="#767676" stroke-width=".5"/><ellipse cx="9" cy="3.2" rx="8.400" ry="2.700" fill="url(#dbt)" stroke="#8c8c8c" stroke-width=".7"/></svg><div class="row" style="left:58px;top:1px;font-size:17px;line-height:25px;letter-spacing:-0.269px">Dos Header</div>
<svg class="abs" style="left:10px;top:32px" width="8" height="8" viewBox="0 0 8 8"><path d="M6.800 .8V6.800H.8z" fill="#585858" stroke="#2c2c2c" stroke-width="1" stroke-linejoin="round"/></svg><svg class="abs" style="left:31.5px;top:27px" width="18" height="21" viewBox="0 0 18 21"><defs><linearGradient id="dbg" x1="0" y1="0" x2="1" y2="0"><stop offset="0" stop-color="#7a7a7a"/><stop offset=".3" stop-color="#ececec"/><stop offset=".55" stop-color="#c4c4c4"/><stop offset="1" stop-color="#6c6c6c"/></linearGradient><linearGradient id="dbt" x1="0" y1="0" x2="1" y2="1"><stop offset="0" stop-color="#ffffff"/><stop offset="1" stop-color="#cfcfcf"/></linearGradient></defs><path d="M.6 15.2v4.600a8.400 2.700 0 0 0 16.800 0v-4.600z" fill="url(#dbg)" stroke="#767676" stroke-width=".5"/><ellipse cx="9" cy="15.2" rx="8.400" ry="2.700" fill="url(#dbt)" stroke="#8c8c8c" stroke-width=".7"/><path d="M.6 9.2v4.600a8.400 2.700 0 0 0 16.800 0v-4.600z" fill="url(#dbg)" stroke="#767676" stroke-width=".5"/><ellipse cx="9" cy="9.2" rx="8.400" ry="2.700" fill="url(#dbt)" stroke="#8c8c8c" stroke-width=".7"/><path d="M.6 3.2v4.600a8.400 2.700 0 0 0 16.800 0v-4.600z" fill="url(#dbg)" stroke="#767676" stroke-width=".5"/><ellipse cx="9" cy="3.2" rx="8.400" ry="2.700" fill="url(#dbt)" stroke="#8c8c8c" stroke-width=".7"/></svg><div class="row" style="left:58px;top:26px;font-size:17px;line-height:25px;letter-spacing:-0.098px">Nt Headers</div>
<svg class="abs" style="left:58.5px;top:52px" width="18" height="21" viewBox="0 0 18 21"><defs><linearGradient id="dbg" x1="0" y1="0" x2="1" y2="0"><stop offset="0" stop-color="#7a7a7a"/><stop offset=".3" stop-color="#ececec"/><stop offset=".55" stop-color="#c4c4c4"/><stop offset="1" stop-color="#6c6c6c"/></linearGradient><linearGradient id="dbt" x1="0" y1="0" x2="1" y2="1"><stop offset="0" stop-color="#ffffff"/><stop offset="1" stop-color="#cfcfcf"/></linearGradient></defs><path d="M.6 15.2v4.600a8.400 2.700 0 0 0 16.800 0v-4.600z" fill="url(#dbg)" stroke="#767676" stroke-width=".5"/><ellipse cx="9" cy="15.2" rx="8.400" ry="2.700" fill="url(#dbt)" stroke="#8c8c8c" stroke-width=".7"/><path d="M.6 9.2v4.600a8.400 2.700 0 0 0 16.800 0v-4.600z" fill="url(#dbg)" stroke="#767676" stroke-width=".5"/><ellipse cx="9" cy="9.2" rx="8.400" ry="2.700" fill="url(#dbt)" stroke="#8c8c8c" stroke-width=".7"/><path d="M.6 3.2v4.600a8.400 2.700 0 0 0 16.800 0v-4.600z" fill="url(#dbg)" stroke="#767676" stroke-width=".5"/><ellipse cx="9" cy="3.2" rx="8.400" ry="2.700" fill="url(#dbt)" stroke="#8c8c8c" stroke-width=".7"/></svg><div class="row" style="left:85px;top:51px;font-size:17px;line-height:25px;letter-spacing:-0.328px">File Header</div>
<svg class="abs" style="left:37px;top:82px" width="8" height="8" viewBox="0 0 8 8"><path d="M6.800 .8V6.800H.8z" fill="#585858" stroke="#2c2c2c" stroke-width="1" stroke-linejoin="round"/></svg><svg class="abs" style="left:58.5px;top:77px" width="18" height="21" viewBox="0 0 18 21"><defs><linearGradient id="dbg" x1="0" y1="0" x2="1" y2="0"><stop offset="0" stop-color="#7a7a7a"/><stop offset=".3" stop-color="#ececec"/><stop offset=".55" stop-color="#c4c4c4"/><stop offset="1" stop-color="#6c6c6c"/></linearGradient><linearGradient id="dbt" x1="0" y1="0" x2="1" y2="1"><stop offset="0" stop-color="#ffffff"/><stop offset="1" stop-color="#cfcfcf"/></linearGradient></defs><path d="M.6 15.2v4.600a8.400 2.700 0 0 0 16.800 0v-4.600z" fill="url(#dbg)" stroke="#767676" stroke-width=".5"/><ellipse cx="9" cy="15.2" rx="8.400" ry="2.700" fill="url(#dbt)" stroke="#8c8c8c" stroke-width=".7"/><path d="M.6 9.2v4.600a8.400 2.700 0 0 0 16.800 0v-4.600z" fill="url(#dbg)" stroke="#767676" stroke-width=".5"/><ellipse cx="9" cy="9.2" rx="8.400" ry="2.700" fill="url(#dbt)" stroke="#8c8c8c" stroke-width=".7"/><path d="M.6 3.2v4.600a8.400 2.700 0 0 0 16.800 0v-4.600z" fill="url(#dbg)" stroke="#767676" stroke-width=".5"/><ellipse cx="9" cy="3.2" rx="8.400" ry="2.700" fill="url(#dbt)" stroke="#8c8c8c" stroke-width=".7"/></svg><div class="row" style="left:85px;top:76px;font-size:17px;line-height:25px;letter-spacing:0.113px">Optional Header</div>
<svg class="abs" style="left:85.5px;top:102px" width="18" height="21" viewBox="0 0 18 21"><defs><linearGradient id="dbg" x1="0" y1="0" x2="1" y2="0"><stop offset="0" stop-color="#7a7a7a"/><stop offset=".3" stop-color="#ececec"/><stop offset=".55" stop-color="#c4c4c4"/><stop offset="1" stop-color="#6c6c6c"/></linearGradient><linearGradient id="dbt" x1="0" y1="0" x2="1" y2="1"><stop offset="0" stop-color="#ffffff"/><stop offset="1" stop-color="#cfcfcf"/></linearGradient></defs><path d="M.6 15.2v4.600a8.400 2.700 0 0 0 16.800 0v-4.600z" fill="url(#dbg)" stroke="#767676" stroke-width=".5"/><ellipse cx="9" cy="15.2" rx="8.400" ry="2.700" fill="url(#dbt)" stroke="#8c8c8c" stroke-width=".7"/><path d="M.6 9.2v4.600a8.400 2.700 0 0 0 16.800 0v-4.600z" fill="url(#dbg)" stroke="#767676" stroke-width=".5"/><ellipse cx="9" cy="9.2" rx="8.400" ry="2.700" fill="url(#dbt)" stroke="#8c8c8c" stroke-width=".7"/><path d="M.6 3.2v4.600a8.400 2.700 0 0 0 16.800 0v-4.600z" fill="url(#dbg)" stroke="#767676" stroke-width=".5"/><ellipse cx="9" cy="3.2" rx="8.400" ry="2.700" fill="url(#dbt)" stroke="#8c8c8c" stroke-width=".7"/></svg><div class="row" style="left:112px;top:101px;font-size:17px;line-height:25px;letter-spacing:-0.058px">Data Directories</div>
<svg class="abs" style="left:31.5px;top:127px" width="18" height="21" viewBox="0 0 18 21"><defs><linearGradient id="dbg" x1="0" y1="0" x2="1" y2="0"><stop offset="0" stop-color="#7a7a7a"/><stop offset=".3" stop-color="#ececec"/><stop offset=".55" stop-color="#c4c4c4"/><stop offset="1" stop-color="#6c6c6c"/></linearGradient><linearGradient id="dbt" x1="0" y1="0" x2="1" y2="1"><stop offset="0" stop-color="#ffffff"/><stop offset="1" stop-color="#cfcfcf"/></linearGradient></defs><path d="M.6 15.2v4.600a8.400 2.700 0 0 0 16.800 0v-4.600z" fill="url(#dbg)" stroke="#767676" stroke-width=".5"/><ellipse cx="9" cy="15.2" rx="8.400" ry="2.700" fill="url(#dbt)" stroke="#8c8c8c" stroke-width=".7"/><path d="M.6 9.2v4.600a8.400 2.700 0 0 0 16.800 0v-4.600z" fill="url(#dbg)" stroke="#767676" stroke-width=".5"/><ellipse cx="9" cy="9.2" rx="8.400" ry="2.700" fill="url(#dbt)" stroke="#8c8c8c" stroke-width=".7"/><path d="M.6 3.2v4.600a8.400 2.700 0 0 0 16.800 0v-4.600z" fill="url(#dbg)" stroke="#767676" stroke-width=".5"/><ellipse cx="9" cy="3.2" rx="8.400" ry="2.700" fill="url(#dbt)" stroke="#8c8c8c" stroke-width=".7"/></svg><div class="row" style="left:58px;top:126px;font-size:17px;line-height:25px;letter-spacing:-0.256px">Section Headers</div>
<svg class="abs" style="left:28.5px;top:153px" width="22" height="19" viewBox="0 0 22 19"><path d="M1 3.500q0-2 2-2h5.500l2 2.500h9.500v5H1z" fill="#ececec" stroke="#cfcfcf" stroke-width=".7"/><defs><linearGradient id="fg" x1="0" y1="0" x2=".6" y2="1"><stop offset="0" stop-color="#8fc0f0"/><stop offset=".5" stop-color="#4a8ade"/><stop offset="1" stop-color="#2260b8"/></linearGradient></defs><path d="M.5 5.500h20.500v11.500q0 1-1 1H1.500q-1 0-1-1z" fill="url(#fg)"/></svg><div class="row" style="left:58px;top:151px;font-size:17px;line-height:25px;letter-spacing:0.299px">Import Directory</div>
<svg class="abs" style="left:28.5px;top:178px" width="22" height="19" viewBox="0 0 22 19"><path d="M1 3.500q0-2 2-2h5.500l2 2.500h9.500v5H1z" fill="#ececec" stroke="#cfcfcf" stroke-width=".7"/><defs><linearGradient id="fg" x1="0" y1="0" x2=".6" y2="1"><stop offset="0" stop-color="#8fc0f0"/><stop offset=".5" stop-color="#4a8ade"/><stop offset="1" stop-color="#2260b8"/></linearGradient></defs><path d="M.5 5.500h20.500v11.500q0 1-1 1H1.500q-1 0-1-1z" fill="url(#fg)"/></svg><div class="row" style="left:58px;top:176px;font-size:17px;line-height:25px;letter-spacing:-0.324px">Resource Directory</div>
</div>
<div class="sb" style="left:380px;top:728px;width:22px;height:185px"></div><div class="th" style="left:380px;top:751px;width:22px;height:48px"></div><svg class="abs" style="left:380px;top:728px" width="22" height="185"><polyline points="6.7,15.0 11.0,10.0 15.3,15.0" fill="none" stroke="#555" stroke-width="1.900"/><polyline points="6.7,170.0 11.0,175.0 15.3,170.0" fill="none" stroke="#555" stroke-width="1.900"/></svg>
<div class="sb" style="left:11px;top:913px;width:369px;height:23px"></div><div class="th" style="left:35px;top:913px;width:298px;height:23px"></div><svg class="abs" style="left:11px;top:913px" width="369" height="23"><polyline points="13.5,7.2 8.5,11.5 13.5,15.8" fill="none" stroke="#555" stroke-width="1.900"/><polyline points="355.5,7.2 360.5,11.5 355.5,15.8" fill="none" stroke="#555" stroke-width="1.900"/></svg>
<div class="sb" style="left:380px;top:913px;width:22px;height:23px"></div>
<div class="abs" style="left:408px;top:232px;width:1433px;height:1px;background:#a0a0a0"></div>
<div class="abs" style="left:408px;top:203px;width:251px;height:30px;background:#fff;border:1px solid #a0a0a0;border-bottom:none"></div>
<svg class="abs" style="left:423px;top:208px" width="18" height="18" viewBox="0 0 18 18"><circle cx="7" cy="7" r="5.200" fill="#d8ecfa" stroke="#8aa8c0" stroke-width="1.600"/><path d="M11 11l5.500 5.500" stroke="#2a2a2a" stroke-width="2.600" stroke-linecap="round"/></svg>
<div class="row" style="left:444px;top:203px;font-size:16px;line-height:29px;letter-spacing:-0.517px">Analysis [.NET byte code]</div>
<svg class="abs" style="left:623px;top:210px" width="15" height="15" viewBox="0 0 15 15"><rect x=".5" y=".5" width="14" height="14" rx="2.500" fill="#e86a4a" stroke="#c0452a"/><path d="M4.500 4.500l6 6M10.500 4.500l-6 6" stroke="#fff" stroke-width="2.200"/></svg>
<div class="abs" style="left:659px;top:204px;width:176px;height:27px;background:linear-gradient(#f6f6f6,#e6e6e6);border:1px solid #a8a8a8;border-bottom:none"></div>
<svg class="abs" style="left:674.5px;top:209px" width="14" height="16" viewBox="0 0 16 18"><path d="M1 .5h9l4.500 4.500v11.500H1z" fill="#fafafa" stroke="#a0a0a0" stroke-width="1"/><path d="M10 .5v4.500h4.500" fill="#e0e0e0" stroke="#a0a0a0" stroke-width="1"/><path d="M3.500 7h8M3.500 9.500h8M3.500 12h8M3.500 14.500h8" stroke="#c4c4c4" stroke-width="1"/></svg>
<div class="row" style="left:694.2px;top:204px;font-size:16px;line-height:29px;letter-spacing:-0.803px">Decoded bytes</div>
<svg class="abs" style="left:800px;top:211px" width="15" height="15" viewBox="0 0 15 15"><rect x=".5" y=".5" width="14" height="14" rx="2.500" fill="#e4e4e4" stroke="#b4b4b4"/><path d="M4.500 4.500l6 6M10.500 4.500l-6 6" stroke="#fff" stroke-width="2.200"/></svg>
<div class="abs" style="left:835px;top:204px;width:156px;height:27px;background:linear-gradient(#f6f6f6,#e6e6e6);border:1px solid #a8a8a8;border-bottom:none"></div>
<svg class="abs" style="left:852px;top:209px" width="14" height="16" viewBox="0 0 16 18"><path d="M1 .5h9l4.500 4.500v11.500H1z" fill="#fafafa" stroke="#a0a0a0" stroke-width="1"/><path d="M10 .5v4.500h4.500" fill="#e0e0e0" stroke="#a0a0a0" stroke-width="1"/><path d="M3.500 7h8M3.500 9.500h8M3.500 12h8M3.500 14.500h8" stroke="#c4c4c4" stroke-width="1"/></svg>
<div class="row" style="left:871.7px;top:204px;font-size:16px;line-height:29px;letter-spacing:-0.384px">Text view 1</div>
<svg class="abs" style="left:957px;top:211px" width="15" height="15" viewBox="0 0 15 15"><rect x=".5" y=".5" width="14" height="14" rx="2.500" fill="#e4e4e4" stroke="#b4b4b4"/><path d="M4.500 4.500l6 6M10.500 4.500l-6 6" stroke="#fff" stroke-width="2.200"/></svg>
<div class="abs" style="left:991px;top:204px;width:181px;height:27px;background:linear-gradient(#f6f6f6,#e6e6e6);border:1px solid #a8a8a8;border-bottom:none"></div>
<div class="row" style="left:1007px;top:204px;font-family:'Liberation Serif',serif;font-weight:bold;color:#2a3a6a;font-size:16px;line-height:28px;letter-spacing:-.5px">0x</div>
<div class="row" style="left:1027.3px;top:204px;font-size:16px;line-height:29px;letter-spacing:-0.639px">From hex string</div>
<svg class="abs" style="left:1138px;top:211px" width="15" height="15" viewBox="0 0 15 15"><rect x=".5" y=".5" width="14" height="14" rx="2.500" fill="#e4e4e4" stroke="#b4b4b4"/><path d="M4.500 4.500l6 6M10.500 4.500l-6 6" stroke="#fff" stroke-width="2.200"/></svg>
<div class="abs" style="left:1172px;top:204px;width:125px;height:27px;background:linear-gradient(#f6f6f6,#e6e6e6);border:1px solid #a8a8a8;border-bottom:none"></div>
<svg class="abs" style="left:1188px;top:208px" width="17" height="18" viewBox="0 0 17 18"><path d="M2 16L13 4" stroke="#1a1a1a" stroke-width="3" stroke-linecap="round"/><path d="M10 7l3-3" stroke="#e8a020" stroke-width="3" stroke-linecap="round"/><path d="M14 1v3M12.500 2.500h3" stroke="#f0c040" stroke-width="1"/></svg>
<div class="row" style="left:1209px;top:204px;font-size:16px;line-height:29px;letter-spacing:-0.477px">Filter...</div>
<svg class="abs" style="left:1262px;top:211px" width="15" height="15" viewBox="0 0 15 15"><rect x=".5" y=".5" width="14" height="14" rx="2.500" fill="#e4e4e4" stroke="#b4b4b4"/><path d="M4.500 4.500l6 6M10.500 4.500l-6 6" stroke="#fff" stroke-width="2.200"/></svg>
<div class="abs" style="left:1297px;top:204px;width:156px;height:27px;background:linear-gradient(#f6f6f6,#e6e6e6);border:1px solid #a8a8a8;border-bottom:none"></div>
<svg class="abs" style="left:1314px;top:209px" width="14" height="16" viewBox="0 0 16 18"><path d="M1 .5h9l4.500 4.500v11.500H1z" fill="#fafafa" stroke="#a0a0a0" stroke-width="1"/><path d="M10 .5v4.500h4.500" fill="#e0e0e0" stroke="#a0a0a0" stroke-width="1"/><path d="M3.500 7h8M3.500 9.500h8M3.500 12h8M3.500 14.500h8" stroke="#c4c4c4" stroke-width="1"/></svg>
<div class="row" style="left:1333.4px;top:204px;font-size:16px;line-height:29px;letter-spacing:-0.314px">Text view 2</div>
<svg class="abs" style="left:1418.5px;top:211px" width="15" height="15" viewBox="0 0 15 15"><rect x=".5" y=".5" width="14" height="14" rx="2.500" fill="#e4e4e4" stroke="#b4b4b4"/><path d="M4.500 4.500l6 6M10.500 4.500l-6 6" stroke="#fff" stroke-width="2.200"/></svg>
<div class="abs" style="left:1453px;top:204px;width:124px;height:27px;background:linear-gradient(#f6f6f6,#e6e6e6);border:1px solid #a8a8a8;border-bottom:none"></div>
<svg class="abs" style="left:1468px;top:208px" width="17" height="18" viewBox="0 0 17 18"><path d="M2 16L13 4" stroke="#1a1a1a" stroke-width="3" stroke-linecap="round"/><path d="M10 7l3-3" stroke="#e8a020" stroke-width="3" stroke-linecap="round"/><path d="M14 1v3M12.500 2.500h3" stroke="#f0c040" stroke-width="1"/></svg>
<div class="row" style="left:1489px;top:204px;font-size:16px;line-height:29px;letter-spacing:-0.464px">Filter...</div>
<svg class="abs" style="left:1541.5px;top:211px" width="15" height="15" viewBox="0 0 15 15"><rect x=".5" y=".5" width="14" height="14" rx="2.500" fill="#e4e4e4" stroke="#b4b4b4"/><path d="M4.500 4.500l6 6M10.500 4.500l-6 6" stroke="#fff" stroke-width="2.200"/></svg>
<div class="abs" style="left:1577px;top:204px;width:156px;height:27px;background:linear-gradient(#f6f6f6,#e6e6e6);border:1px solid #a8a8a8;border-bottom:none"></div>
<svg class="abs" style="left:1593.5px;top:209px" width="14" height="16" viewBox="0 0 16 18"><path d="M1 .5h9l4.500 4.500v11.500H1z" fill="#fafafa" stroke="#a0a0a0" stroke-width="1"/><path d="M10 .5v4.500h4.500" fill="#e0e0e0" stroke="#a0a0a0" stroke-width="1"/><path d="M3.500 7h8M3.500 9.500h8M3.500 12h8M3.500 14.500h8" stroke="#c4c4c4" stroke-width="1"/></svg>
<div class="row" style="left:1613.6px;top:204px;font-size:16px;line-height:29px;letter-spacing:-0.374px">Text view 3</div>
<svg class="abs" style="left:1698.4px;top:211px" width="15" height="15" viewBox="0 0 15 15"><rect x=".5" y=".5" width="14" height="14" rx="2.500" fill="#e4e4e4" stroke="#b4b4b4"/><path d="M4.500 4.500l6 6M10.500 4.500l-6 6" stroke="#fff" stroke-width="2.200"/></svg>
<div class="abs" style="left:1733px;top:204px;width:108px;height:27px;background:linear-gradient(#f6f6f6,#e6e6e6);border:1px solid #a8a8a8;border-bottom:none"></div>
<svg class="abs" style="left:1750px;top:209px" width="14" height="16" viewBox="0 0 16 18"><path d="M1 .5h9l4.500 4.500v11.500H1z" fill="#fafafa" stroke="#a0a0a0" stroke-width="1"/><path d="M10 .5v4.500h4.500" fill="#e0e0e0" stroke="#a0a0a0" stroke-width="1"/><path d="M3.500 7h8M3.500 9.500h8M3.500 12h8M3.500 14.500h8" stroke="#c4c4c4" stroke-width="1"/></svg>
<div class="abs" style="left:1820px;top:202px;width:22px;height:30px;background:rgba(186,216,248,.75);border:1px solid #6a9fd8;border-right-color:#8dc7fa"></div>
<div class="row" style="left:1769.3px;top:204px;font-size:16px;line-height:29px;width:72px;overflow:hidden;letter-spacing:-0.803px">Decoded bytes</div>
<div class="abs" style="left:659px;top:231px;width:1182px;height:1px;background:#a2a2a2"></div>
<div class="abs" style="left:1842px;top:200px;width:9px;height:40px;background:#8dc7fa"></div>
<svg class="abs" style="left:1827px;top:211px" width="10" height="14" viewBox="0 0 10 14"><path d="M1 1l7 6-7 6z" fill="#000"/></svg>
<svg class="abs" style="left:1806px;top:210px" width="7" height="13" viewBox="0 0 7 13"><path d="M6 1L1 6.500l5 5.500z" fill="#a8a8a8" opacity=".85"/></svg>
<div class="frame" style="left:408px;top:232px;width:300px;height:705px;border-top-color:#b0b0b0"></div>
<div class="abs" style="left:409px;top:233px;width:275px;height:680px;overflow:hidden">
<svg class="abs" style="left:30px;top:1px" width="23" height="22" viewBox="0 0 23 22"><rect x="0.800" y="3.700" width="10.500" height="6.300" rx="2" transform="rotate(-40 6 6.800)" fill="#ece47e" stroke="#a89c4a" stroke-width="1.500"/><rect x="13.200" y="6.500" width="9" height="4.600" rx="2.200" transform="rotate(-52 17.700 8.800)" fill="#f084b4" stroke="#b04878" stroke-width="1.300"/><rect x="12.800" y="15" width="9" height="4.600" rx="2.200" transform="rotate(-40 17.300 17.300)" fill="#86e2e4" stroke="#48a4a8" stroke-width="1.300"/><path d="M11.200 7v7.300q0 1.700 1.700 1.700h1.300M9.300 9.600h5.200" fill="none" stroke="#1a1a1a" stroke-width="1.700"/></svg><div class="row mono" style="left:58px;top:1.5px;line-height:24px">&lt;Module&gt;</div>
<svg class="abs" style="left:11px;top:30px" width="8" height="12" viewBox="0 0 8 12"><path d="M1 1l5.500 5L1 11z" fill="#fff" stroke="#a0a0a0" stroke-width="1.100" stroke-linejoin="round"/></svg><svg class="abs" style="left:30px;top:25px" width="23" height="22" viewBox="0 0 23 22"><rect x="0.800" y="3.700" width="10.500" height="6.300" rx="2" transform="rotate(-40 6 6.800)" fill="#ece47e" stroke="#a89c4a" stroke-width="1.500"/><rect x="13.200" y="6.500" width="9" height="4.600" rx="2.200" transform="rotate(-52 17.700 8.800)" fill="#f084b4" stroke="#b04878" stroke-width="1.300"/><rect x="12.800" y="15" width="9" height="4.600" rx="2.200" transform="rotate(-40 17.300 17.300)" fill="#86e2e4" stroke="#48a4a8" stroke-width="1.300"/><path d="M11.200 7v7.300q0 1.700 1.700 1.700h1.300M9.300 9.600h5.200" fill="none" stroke="#1a1a1a" stroke-width="1.700"/></svg><div class="row mono" style="left:58px;top:25.5px;line-height:24px">Entity18</div>
<svg class="abs" style="left:30px;top:49px" width="23" height="22" viewBox="0 0 23 22"><rect x="0.800" y="3.700" width="10.500" height="6.300" rx="2" transform="rotate(-40 6 6.800)" fill="#ece47e" stroke="#a89c4a" stroke-width="1.500"/><rect x="13.200" y="6.500" width="9" height="4.600" rx="2.200" transform="rotate(-52 17.700 8.800)" fill="#f084b4" stroke="#b04878" stroke-width="1.300"/><rect x="12.800" y="15" width="9" height="4.600" rx="2.200" transform="rotate(-40 17.300 17.300)" fill="#86e2e4" stroke="#48a4a8" stroke-width="1.300"/><path d="M11.200 7v7.300q0 1.700 1.700 1.700h1.300M9.300 9.600h5.200" fill="none" stroke="#1a1a1a" stroke-width="1.700"/></svg><div class="row mono" style="left:58px;top:49.5px;line-height:24px">Entity19</div>
<svg class="abs" style="left:11px;top:78px" width="8" height="12" viewBox="0 0 8 12"><path d="M1 1l5.500 5L1 11z" fill="#fff" stroke="#a0a0a0" stroke-width="1.100" stroke-linejoin="round"/></svg><svg class="abs" style="left:30px;top:73px" width="23" height="22" viewBox="0 0 23 22"><rect x="0.800" y="3.700" width="10.500" height="6.300" rx="2" transform="rotate(-40 6 6.800)" fill="#ece47e" stroke="#a89c4a" stroke-width="1.500"/><rect x="13.200" y="6.500" width="9" height="4.600" rx="2.200" transform="rotate(-52 17.700 8.800)" fill="#f084b4" stroke="#b04878" stroke-width="1.300"/><rect x="12.800" y="15" width="9" height="4.600" rx="2.200" transform="rotate(-40 17.300 17.300)" fill="#86e2e4" stroke="#48a4a8" stroke-width="1.300"/><path d="M11.200 7v7.300q0 1.700 1.700 1.700h1.300M9.300 9.600h5.200" fill="none" stroke="#1a1a1a" stroke-width="1.700"/></svg><div class="row mono" style="left:58px;top:73.5px;line-height:24px">Entity20</div>
<svg class="abs" style="left:11px;top:102px" width="8" height="12" viewBox="0 0 8 12"><path d="M1 1l5.500 5L1 11z" fill="#fff" stroke="#a0a0a0" stroke-width="1.100" stroke-linejoin="round"/></svg><svg class="abs" style="left:30px;top:97px" width="23" height="22" viewBox="0 0 23 22"><rect x="0.800" y="3.700" width="10.500" height="6.300" rx="2" transform="rotate(-40 6 6.800)" fill="#ece47e" stroke="#a89c4a" stroke-width="1.500"/><rect x="13.200" y="6.500" width="9" height="4.600" rx="2.200" transform="rotate(-52 17.700 8.800)" fill="#f084b4" stroke="#b04878" stroke-width="1.300"/><rect x="12.800" y="15" width="9" height="4.600" rx="2.200" transform="rotate(-40 17.300 17.300)" fill="#86e2e4" stroke="#48a4a8" stroke-width="1.300"/><path d="M11.200 7v7.300q0 1.700 1.700 1.700h1.300M9.300 9.600h5.200" fill="none" stroke="#1a1a1a" stroke-width="1.700"/></svg><div class="row mono" style="left:58px;top:97.5px;line-height:24px">Entity21</div>
<svg class="abs" style="left:11px;top:126px" width="8" height="12" viewBox="0 0 8 12"><path d="M1 1l5.500 5L1 11z" fill="#fff" stroke="#a0a0a0" stroke-width="1.100" stroke-linejoin="round"/></svg><svg class="abs" style="left:30px;top:121px" width="23" height="22" viewBox="0 0 23 22"><rect x="0.800" y="3.700" width="10.500" height="6.300" rx="2" transform="rotate(-40 6 6.800)" fill="#ece47e" stroke="#a89c4a" stroke-width="1.500"/><rect x="13.200" y="6.500" width="9" height="4.600" rx="2.200" transform="rotate(-52 17.700 8.800)" fill="#f084b4" stroke="#b04878" stroke-width="1.300"/><rect x="12.800" y="15" width="9" height="4.600" rx="2.200" transform="rotate(-40 17.300 17.300)" fill="#86e2e4" stroke="#48a4a8" stroke-width="1.300"/><path d="M11.200 7v7.300q0 1.700 1.700 1.700h1.300M9.300 9.600h5.200" fill="none" stroke="#1a1a1a" stroke-width="1.700"/></svg><div class="row mono" style="left:58px;top:121.5px;line-height:24px">IntÐ tr</div>
<svg class="abs" style="left:30px;top:145px" width="23" height="22" viewBox="0 0 23 22"><rect x="0.800" y="3.700" width="10.500" height="6.300" rx="2" transform="rotate(-40 6 6.800)" fill="#ece47e" stroke="#a89c4a" stroke-width="1.500"/><rect x="13.200" y="6.500" width="9" height="4.600" rx="2.200" transform="rotate(-52 17.700 8.800)" fill="#f084b4" stroke="#b04878" stroke-width="1.300"/><rect x="12.800" y="15" width="9" height="4.600" rx="2.200" transform="rotate(-40 17.300 17.300)" fill="#86e2e4" stroke="#48a4a8" stroke-width="1.300"/><path d="M11.200 7v7.300q0 1.700 1.700 1.700h1.300M9.300 9.600h5.200" fill="none" stroke="#1a1a1a" stroke-width="1.700"/></svg><div class="row mono" style="left:58px;top:145.5px;line-height:24px">CryptoHelper</div>
<svg class="abs" style="left:30px;top:169px" width="23" height="22" viewBox="0 0 23 22"><rect x="0.800" y="3.700" width="10.500" height="6.300" rx="2" transform="rotate(-40 6 6.800)" fill="#ece47e" stroke="#a89c4a" stroke-width="1.500"/><rect x="13.200" y="6.500" width="9" height="4.600" rx="2.200" transform="rotate(-52 17.700 8.800)" fill="#f084b4" stroke="#b04878" stroke-width="1.300"/><rect x="12.800" y="15" width="9" height="4.600" rx="2.200" transform="rotate(-40 17.300 17.300)" fill="#86e2e4" stroke="#48a4a8" stroke-width="1.300"/><path d="M11.200 7v7.300q0 1.700 1.700 1.700h1.300M9.300 9.600h5.200" fill="none" stroke="#1a1a1a" stroke-width="1.700"/></svg><div class="row mono" style="left:58px;top:169.5px;line-height:24px">StringDecrypt</div>
<svg class="abs" style="left:30px;top:193px" width="23" height="22" viewBox="0 0 23 22"><rect x="0.800" y="3.700" width="10.500" height="6.300" rx="2" transform="rotate(-40 6 6.800)" fill="#ece47e" stroke="#a89c4a" stroke-width="1.500"/><rect x="13.200" y="6.500" width="9" height="4.600" rx="2.200" transform="rotate(-52 17.700 8.800)" fill="#f084b4" stroke="#b04878" stroke-width="1.300"/><rect x="12.800" y="15" width="9" height="4.600" rx="2.200" transform="rotate(-40 17.300 17.300)" fill="#86e2e4" stroke="#48a4a8" stroke-width="1.300"/><path d="M11.200 7v7.300q0 1.700 1.700 1.700h1.300M9.300 9.600h5.200" fill="none" stroke="#1a1a1a" stroke-width="1.700"/></svg><div class="row mono" style="left:58px;top:193.5px;line-height:24px">ConnectionProvider</div>
<div class="abs" style="left:27px;top:216px;width:247px;height:24px;background:#cce6f8;border:1px solid #4aa4e0"></div><svg class="abs" style="left:11px;top:222px" width="8" height="12" viewBox="0 0 8 12"><path d="M1 1l5.500 5L1 11z" fill="#fff" stroke="#a0a0a0" stroke-width="1.100" stroke-linejoin="round"/></svg><svg class="abs" style="left:30px;top:217px" width="23" height="22" viewBox="0 0 23 22"><rect x="0.800" y="3.700" width="10.500" height="6.300" rx="2" transform="rotate(-40 6 6.800)" fill="#ece47e" stroke="#a89c4a" stroke-width="1.500"/><rect x="13.200" y="6.500" width="9" height="4.600" rx="2.200" transform="rotate(-52 17.700 8.800)" fill="#f084b4" stroke="#b04878" stroke-width="1.300"/><rect x="12.800" y="15" width="9" height="4.600" rx="2.200" transform="rotate(-40 17.300 17.300)" fill="#86e2e4" stroke="#48a4a8" stroke-width="1.300"/><path d="M11.200 7v7.300q0 1.700 1.700 1.700h1.300M9.300 9.600h5.200" fill="none" stroke="#1a1a1a" stroke-width="1.700"/></svg><div class="row mono" style="left:58px;top:217.5px;line-height:24px">Program</div>
<svg class="abs" style="left:30px;top:241px" width="23" height="22" viewBox="0 0 23 22"><rect x="0.800" y="3.700" width="10.500" height="6.300" rx="2" transform="rotate(-40 6 6.800)" fill="#ece47e" stroke="#a89c4a" stroke-width="1.500"/><rect x="13.200" y="6.500" width="9" height="4.600" rx="2.200" transform="rotate(-52 17.700 8.800)" fill="#f084b4" stroke="#b04878" stroke-width="1.300"/><rect x="12.800" y="15" width="9" height="4.600" rx="2.200" transform="rotate(-40 17.300 17.300)" fill="#86e2e4" stroke="#48a4a8" stroke-width="1.300"/><path d="M11.200 7v7.300q0 1.700 1.700 1.700h1.300M9.300 9.600h5.200" fill="none" stroke="#1a1a1a" stroke-width="1.700"/></svg><div class="row mono" style="left:58px;top:241.5px;line-height:24px">Arguments</div>
<svg class="abs" style="left:11px;top:270px" width="8" height="12" viewBox="0 0 8 12"><path d="M1 1l5.500 5L1 11z" fill="#fff" stroke="#a0a0a0" stroke-width="1.100" stroke-linejoin="round"/></svg><svg class="abs" style="left:30px;top:265px" width="23" height="22" viewBox="0 0 23 22"><rect x="0.800" y="3.700" width="10.500" height="6.300" rx="2" transform="rotate(-40 6 6.800)" fill="#ece47e" stroke="#a89c4a" stroke-width="1.500"/><rect x="13.200" y="6.500" width="9" height="4.600" rx="2.200" transform="rotate(-52 17.700 8.800)" fill="#f084b4" stroke="#b04878" stroke-width="1.300"/><rect x="12.800" y="15" width="9" height="4.600" rx="2.200" transform="rotate(-40 17.300 17.300)" fill="#86e2e4" stroke="#48a4a8" stroke-width="1.300"/><path d="M11.200 7v7.300q0 1.700 1.700 1.700h1.300M9.300 9.600h5.200" fill="none" stroke="#1a1a1a" stroke-width="1.700"/></svg><div class="row mono" style="left:58px;top:265.5px;line-height:24px">PartsSender</div>
<svg class="abs" style="left:11px;top:294px" width="8" height="12" viewBox="0 0 8 12"><path d="M1 1l5.500 5L1 11z" fill="#fff" stroke="#a0a0a0" stroke-width="1.100" stroke-linejoin="round"/></svg><svg class="abs" style="left:30px;top:289px" width="23" height="22" viewBox="0 0 23 22"><rect x="0.800" y="3.700" width="10.500" height="6.300" rx="2" transform="rotate(-40 6 6.800)" fill="#ece47e" stroke="#a89c4a" stroke-width="1.500"/><rect x="13.200" y="6.500" width="9" height="4.600" rx="2.200" transform="rotate(-52 17.700 8.800)" fill="#f084b4" stroke="#b04878" stroke-width="1.300"/><rect x="12.800" y="15" width="9" height="4.600" rx="2.200" transform="rotate(-40 17.300 17.300)" fill="#86e2e4" stroke="#48a4a8" stroke-width="1.300"/><path d="M11.200 7v7.300q0 1.700 1.700 1.700h1.300M9.300 9.600h5.200" fill="none" stroke="#1a1a1a" stroke-width="1.700"/></svg><div class="row mono" style="left:58px;top:289.5px;line-height:24px">FullInfoSender</div>
<svg class="abs" style="left:30px;top:313px" width="23" height="22" viewBox="0 0 23 22"><rect x="0.800" y="3.700" width="10.500" height="6.300" rx="2" transform="rotate(-40 6 6.800)" fill="#ece47e" stroke="#a89c4a" stroke-width="1.500"/><rect x="13.200" y="6.500" width="9" height="4.600" rx="2.200" transform="rotate(-52 17.700 8.800)" fill="#f084b4" stroke="#b04878" stroke-width="1.300"/><rect x="12.800" y="15" width="9" height="4.600" rx="2.200" transform="rotate(-40 17.300 17.300)" fill="#86e2e4" stroke="#48a4a8" stroke-width="1.300"/><path d="M11.200 7v7.300q0 1.700 1.700 1.700h1.300M9.300 9.600h5.200" fill="none" stroke="#1a1a1a" stroke-width="1.700"/></svg><div class="row mono" style="left:58px;top:313.5px;line-height:24px">Enter</div>
<svg class="abs" style="left:30px;top:337px" width="23" height="22" viewBox="0 0 23 22"><rect x="0.800" y="3.700" width="10.500" height="6.300" rx="2" transform="rotate(-40 6 6.800)" fill="#ece47e" stroke="#a89c4a" stroke-width="1.500"/><rect x="13.200" y="6.500" width="9" height="4.600" rx="2.200" transform="rotate(-52 17.700 8.800)" fill="#f084b4" stroke="#b04878" stroke-width="1.300"/><rect x="12.800" y="15" width="9" height="4.600" rx="2.200" transform="rotate(-40 17.300 17.300)" fill="#86e2e4" stroke="#48a4a8" stroke-width="1.300"/><path d="M11.200 7v7.300q0 1.700 1.700 1.700h1.300M9.300 9.600h5.200" fill="none" stroke="#1a1a1a" stroke-width="1.700"/></svg><div class="row mono" style="left:58px;top:337.5px;line-height:24px">EntityResolver</div>
<svg class="abs" style="left:30px;top:361px" width="23" height="22" viewBox="0 0 23 22"><rect x="0.800" y="3.700" width="10.500" height="6.300" rx="2" transform="rotate(-40 6 6.800)" fill="#ece47e" stroke="#a89c4a" stroke-width="1.500"/><rect x="13.200" y="6.500" width="9" height="4.600" rx="2.200" transform="rotate(-52 17.700 8.800)" fill="#f084b4" stroke="#b04878" stroke-width="1.300"/><rect x="12.800" y="15" width="9" height="4.600" rx="2.200" transform="rotate(-40 17.300 17.300)" fill="#86e2e4" stroke="#48a4a8" stroke-width="1.300"/><path d="M11.200 7v7.300q0 1.700 1.700 1.700h1.300M9.300 9.600h5.200" fill="none" stroke="#1a1a1a" stroke-width="1.700"/></svg><div class="row mono" style="left:58px;top:361.5px;line-height:24px">ItemBase</div>
<svg class="abs" style="left:30px;top:385px" width="23" height="22" viewBox="0 0 23 22"><rect x="0.800" y="3.700" width="10.500" height="6.300" rx="2" transform="rotate(-40 6 6.800)" fill="#ece47e" stroke="#a89c4a" stroke-width="1.500"/><rect x="13.200" y="6.500" width="9" height="4.600" rx="2.200" transform="rotate(-52 17.700 8.800)" fill="#f084b4" stroke="#b04878" stroke-width="1.300"/><rect x="12.800" y="15" width="9" height="4.600" rx="2.200" transform="rotate(-40 17.300 17.300)" fill="#86e2e4" stroke="#48a4a8" stroke-width="1.300"/><path d="M11.200 7v7.300q0 1.700 1.700 1.700h1.300M9.300 9.600h5.200" fill="none" stroke="#1a1a1a" stroke-width="1.700"/></svg><div class="row mono" style="left:58px;top:385.5px;line-height:24px">ConfigReader</div>
<svg class="abs" style="left:30px;top:409px" width="23" height="22" viewBox="0 0 23 22"><rect x="0.800" y="3.700" width="10.500" height="6.300" rx="2" transform="rotate(-40 6 6.800)" fill="#ece47e" stroke="#a89c4a" stroke-width="1.500"/><rect x="13.200" y="6.500" width="9" height="4.600" rx="2.200" transform="rotate(-52 17.700 8.800)" fill="#f084b4" stroke="#b04878" stroke-width="1.300"/><rect x="12.800" y="15" width="9" height="4.600" rx="2.200" transform="rotate(-40 17.300 17.300)" fill="#86e2e4" stroke="#48a4a8" stroke-width="1.300"/><path d="M11.200 7v7.300q0 1.700 1.700 1.700h1.300M9.300 9.600h5.200" fill="none" stroke="#1a1a1a" stroke-width="1.700"/></svg><div class="row mono" style="left:58px;top:409.5px;line-height:24px">FileScanning</div>
<svg class="abs" style="left:30px;top:433px" width="23" height="22" viewBox="0 0 23 22"><rect x="0.800" y="3.700" width="10.500" height="6.300" rx="2" transform="rotate(-40 6 6.800)" fill="#ece47e" stroke="#a89c4a" stroke-width="1.500"/><rect x="13.200" y="6.500" width="9" height="4.600" rx="2.200" transform="rotate(-52 17.700 8.800)" fill="#f084b4" stroke="#b04878" stroke-width="1.300"/><rect x="12.800" y="15" width="9" height="4.600" rx="2.200" transform="rotate(-40 17.300 17.300)" fill="#86e2e4" stroke="#48a4a8" stroke-width="1.300"/><path d="M11.200 7v7.300q0 1.700 1.700 1.700h1.300M9.300 9.600h5.200" fill="none" stroke="#1a1a1a" stroke-width="1.700"/></svg><div class="row mono" style="left:58px;top:433.5px;line-height:24px">FileSearcher</div>
<svg class="abs" style="left:30px;top:457px" width="23" height="22" viewBox="0 0 23 22"><rect x="0.800" y="3.700" width="10.500" height="6.300" rx="2" transform="rotate(-40 6 6.800)" fill="#ece47e" stroke="#a89c4a" stroke-width="1.500"/><rect x="13.200" y="6.500" width="9" height="4.600" rx="2.200" transform="rotate(-52 17.700 8.800)" fill="#f084b4" stroke="#b04878" stroke-width="1.300"/><rect x="12.800" y="15" width="9" height="4.600" rx="2.200" transform="rotate(-40 17.300 17.300)" fill="#86e2e4" stroke="#48a4a8" stroke-width="1.300"/><path d="M11.200 7v7.300q0 1.700 1.700 1.700h1.300M9.300 9.600h5.200" fill="none" stroke="#1a1a1a" stroke-width="1.700"/></svg><div class="row mono" style="left:58px;top:457.5px;line-height:24px">AllWallets</div>
<svg class="abs" style="left:11px;top:486px" width="8" height="12" viewBox="0 0 8 12"><path d="M1 1l5.500 5L1 11z" fill="#fff" stroke="#a0a0a0" stroke-width="1.100" stroke-linejoin="round"/></svg><svg class="abs" style="left:30px;top:481px" width="23" height="22" viewBox="0 0 23 22"><rect x="0.800" y="3.700" width="10.500" height="6.300" rx="2" transform="rotate(-40 6 6.800)" fill="#ece47e" stroke="#a89c4a" stroke-width="1.500"/><rect x="13.200" y="6.500" width="9" height="4.600" rx="2.200" transform="rotate(-52 17.700 8.800)" fill="#f084b4" stroke="#b04878" stroke-width="1.300"/><rect x="12.800" y="15" width="9" height="4.600" rx="2.200" transform="rotate(-40 17.300 17.300)" fill="#86e2e4" stroke="#48a4a8" stroke-width="1.300"/><path d="M11.200 7v7.300q0 1.700 1.700 1.700h1.300M9.300 9.600h5.200" fill="none" stroke="#1a1a1a" stroke-width="1.700"/></svg><div class="row mono" style="left:58px;top:481.5px;line-height:24px">BrEx</div>
<svg class="abs" style="left:30px;top:505px" width="23" height="22" viewBox="0 0 23 22"><rect x="0.800" y="3.700" width="10.500" height="6.300" rx="2" transform="rotate(-40 6 6.800)" fill="#ece47e" stroke="#a89c4a" stroke-width="1.500"/><rect x="13.200" y="6.500" width="9" height="4.600" rx="2.200" transform="rotate(-52 17.700 8.800)" fill="#f084b4" stroke="#b04878" stroke-width="1.300"/><rect x="12.800" y="15" width="9" height="4.600" rx="2.200" transform="rotate(-40 17.300 17.300)" fill="#86e2e4" stroke="#48a4a8" stroke-width="1.300"/><path d="M11.200 7v7.300q0 1.700 1.700 1.700h1.300M9.300 9.600h5.200" fill="none" stroke="#1a1a1a" stroke-width="1.700"/></svg><div class="row mono" style="left:58px;top:505.5px;line-height:24px">RosComNadzor</div>
<svg class="abs" style="left:11px;top:534px" width="8" height="12" viewBox="0 0 8 12"><path d="M1 1l5.500 5L1 11z" fill="#fff" stroke="#a0a0a0" stroke-width="1.100" stroke-linejoin="round"/></svg><svg class="abs" style="left:30px;top:529px" width="23" height="22" viewBox="0 0 23 22"><rect x="0.800" y="3.700" width="10.500" height="6.300" rx="2" transform="rotate(-40 6 6.800)" fill="#ece47e" stroke="#a89c4a" stroke-width="1.500"/><rect x="13.200" y="6.500" width="9" height="4.600" rx="2.200" transform="rotate(-52 17.700 8.800)" fill="#f084b4" stroke="#b04878" stroke-width="1.300"/><rect x="12.800" y="15" width="9" height="4.600" rx="2.200" transform="rotate(-40 17.300 17.300)" fill="#86e2e4" stroke="#48a4a8" stroke-width="1.300"/><path d="M11.200 7v7.300q0 1.700 1.700 1.700h1.300M9.300 9.600h5.200" fill="none" stroke="#1a1a1a" stroke-width="1.700"/></svg><div class="row mono" style="left:58px;top:529.5px;line-height:24px">Discord</div>
<svg class="abs" style="left:30px;top:553px" width="23" height="22" viewBox="0 0 23 22"><rect x="0.800" y="3.700" width="10.500" height="6.300" rx="2" transform="rotate(-40 6 6.800)" fill="#ece47e" stroke="#a89c4a" stroke-width="1.500"/><rect x="13.200" y="6.500" width="9" height="4.600" rx="2.200" transform="rotate(-52 17.700 8.800)" fill="#f084b4" stroke="#b04878" stroke-width="1.300"/><rect x="12.800" y="15" width="9" height="4.600" rx="2.200" transform="rotate(-40 17.300 17.300)" fill="#86e2e4" stroke="#48a4a8" stroke-width="1.300"/><path d="M11.200 7v7.300q0 1.700 1.700 1.700h1.300M9.300 9.600h5.200" fill="none" stroke="#1a1a1a" stroke-width="1.700"/></svg><div class="row mono" style="left:58px;top:553.5px;line-height:24px">GameLauncher</div>
<svg class="abs" style="left:30px;top:577px" width="23" height="22" viewBox="0 0 23 22"><rect x="0.800" y="3.700" width="10.500" height="6.300" rx="2" transform="rotate(-40 6 6.800)" fill="#ece47e" stroke="#a89c4a" stroke-width="1.500"/><rect x="13.200" y="6.500" width="9" height="4.600" rx="2.200" transform="rotate(-52 17.700 8.800)" fill="#f084b4" stroke="#b04878" stroke-width="1.300"/><rect x="12.800" y="15" width="9" height="4.600" rx="2.200" transform="rotate(-40 17.300 17.300)" fill="#86e2e4" stroke="#48a4a8" stroke-width="1.300"/><path d="M11.200 7v7.300q0 1.700 1.700 1.700h1.300M9.300 9.600h5.200" fill="none" stroke="#1a1a1a" stroke-width="1.700"/></svg><div class="row mono" style="left:58px;top:577.5px;line-height:24px">OpenVPN</div>
<svg class="abs" style="left:30px;top:601px" width="23" height="22" viewBox="0 0 23 22"><rect x="0.800" y="3.700" width="10.500" height="6.300" rx="2" transform="rotate(-40 6 6.800)" fill="#ece47e" stroke="#a89c4a" stroke-width="1.500"/><rect x="13.200" y="6.500" width="9" height="4.600" rx="2.200" transform="rotate(-52 17.700 8.800)" fill="#f084b4" stroke="#b04878" stroke-width="1.300"/><rect x="12.800" y="15" width="9" height="4.600" rx="2.200" transform="rotate(-40 17.300 17.300)" fill="#86e2e4" stroke="#48a4a8" stroke-width="1.300"/><path d="M11.200 7v7.300q0 1.700 1.700 1.700h1.300M9.300 9.600h5.200" fill="none" stroke="#1a1a1a" stroke-width="1.700"/></svg><div class="row mono" style="left:58px;top:601.5px;line-height:24px">Ð rÐ¾toD½VÐ N</div>
<svg class="abs" style="left:11px;top:630px" width="8" height="12" viewBox="0 0 8 12"><path d="M1 1l5.500 5L1 11z" fill="#fff" stroke="#a0a0a0" stroke-width="1.100" stroke-linejoin="round"/></svg><svg class="abs" style="left:30px;top:625px" width="23" height="22" viewBox="0 0 23 22"><rect x="0.800" y="3.700" width="10.500" height="6.300" rx="2" transform="rotate(-40 6 6.800)" fill="#ece47e" stroke="#a89c4a" stroke-width="1.500"/><rect x="13.200" y="6.500" width="9" height="4.600" rx="2.200" transform="rotate(-52 17.700 8.800)" fill="#f084b4" stroke="#b04878" stroke-width="1.300"/><rect x="12.800" y="15" width="9" height="4.600" rx="2.200" transform="rotate(-40 17.300 17.300)" fill="#86e2e4" stroke="#48a4a8" stroke-width="1.300"/><path d="M11.200 7v7.300q0 1.700 1.700 1.700h1.300M9.300 9.600h5.200" fill="none" stroke="#1a1a1a" stroke-width="1.700"/></svg><div class="row mono" style="left:58px;top:625.5px;line-height:24px">EntityReaderSql</div>
<svg class="abs" style="left:30px;top:649px" width="23" height="22" viewBox="0 0 23 22"><rect x="0.800" y="3.700" width="10.500" height="6.300" rx="2" transform="rotate(-40 6 6.800)" fill="#ece47e" stroke="#a89c4a" stroke-width="1.500"/><rect x="13.200" y="6.500" width="9" height="4.600" rx="2.200" transform="rotate(-52 17.700 8.800)" fill="#f084b4" stroke="#b04878" stroke-width="1.300"/><rect x="12.800" y="15" width="9" height="4.600" rx="2.200" transform="rotate(-40 17.300 17.300)" fill="#86e2e4" stroke="#48a4a8" stroke-width="1.300"/><path d="M11.200 7v7.300q0 1.700 1.700 1.700h1.300M9.300 9.600h5.200" fill="none" stroke="#1a1a1a" stroke-width="1.700"/></svg><div class="row mono" style="left:58px;top:649.5px;line-height:24px">FileExt</div>
<svg class="abs" style="left:30px;top:673px" width="23" height="22" viewBox="0 0 23 22"><rect x="0.800" y="3.700" width="10.500" height="6.300" rx="2" transform="rotate(-40 6 6.800)" fill="#ece47e" stroke="#a89c4a" stroke-width="1.500"/><rect x="13.200" y="6.500" width="9" height="4.600" rx="2.200" transform="rotate(-52 17.700 8.800)" fill="#f084b4" stroke="#b04878" stroke-width="1.300"/><rect x="12.800" y="15" width="9" height="4.600" rx="2.200" transform="rotate(-40 17.300 17.300)" fill="#86e2e4" stroke="#48a4a8" stroke-width="1.300"/><path d="M11.200 7v7.300q0 1.700 1.700 1.700h1.300M9.300 9.600h5.200" fill="none" stroke="#1a1a1a" stroke-width="1.700"/></svg>
</div>
<div class="sb" style="left:684px;top:233px;width:23px;height:680px"></div><div class="th" style="left:684px;top:257px;width:23px;height:270px"></div><svg class="abs" style="left:684px;top:233px" width="23" height="680"><polyline points="7.2,15.0 11.5,10.0 15.8,15.0" fill="none" stroke="#555" stroke-width="1.900"/><polyline points="7.2,665.0 11.5,670.0 15.8,665.0" fill="none" stroke="#555" stroke-width="1.900"/></svg>
<div class="sb" style="left:409px;top:913px;width:275px;height:23px"></div><div class="th" style="left:433px;top:913px;width:207px;height:23px"></div><svg class="abs" style="left:409px;top:913px" width="275" height="23"><polyline points="13.5,7.2 8.5,11.5 13.5,15.8" fill="none" stroke="#555" stroke-width="1.900"/><polyline points="261.5,7.2 266.5,11.5 261.5,15.8" fill="none" stroke="#555" stroke-width="1.900"/></svg>
<div class="sb" style="left:684px;top:913px;width:23px;height:23px"></div>
<div class="frame" style="left:714px;top:232px;width:1127px;height:705px;border-top:none"></div>
<div class="abs" style="left:715px;top:233px;width:50px;height:680px;background:#f0f0f0"></div>
<div class="abs" style="left:765px;top:237px;width:1054px;height:20px;background:#e8e8ff"></div>
<div class="abs" style="left:714px;top:233px;width:1105px;height:680px;overflow:hidden">
<div class="row" style="left:0;top:4px;width:41px;text-align:right;font-size:16px;line-height:20px">1</div><div class="row mono" style="left:55px;top:5px;line-height:20px"><span class="kw">public class abstract sealed</span> Program</div>
<div class="row" style="left:0;top:24px;width:41px;text-align:right;font-size:16px;line-height:20px">2</div><div class="row mono" style="left:55px;top:25px;line-height:20px">{</div>
<div class="row" style="left:0;top:44px;width:41px;text-align:right;font-size:16px;line-height:20px">3</div><div class="row mono" style="left:55px;top:45px;line-height:20px">  <span class="kw">private static void</span> Main(<span class="kw">string</span> [] args)</div>
<div class="row" style="left:0;top:64px;width:41px;text-align:right;font-size:16px;line-height:20px">4</div><div class="row mono" style="left:55px;top:65px;line-height:20px">  {</div>
<div class="row" style="left:0;top:84px;width:41px;text-align:right;font-size:16px;line-height:20px">5</div><div class="row mono" style="left:55px;top:85px;line-height:20px">    <span class="op">nop</span></div>
<div class="row" style="left:0;top:104px;width:41px;text-align:right;font-size:16px;line-height:20px">6</div><div class="row mono" style="left:55px;top:105px;line-height:20px">    <span class="op">call</span> WriteLine() <span class="cm">// returns void</span></div>
<div class="row" style="left:0;top:124px;width:41px;text-align:right;font-size:16px;line-height:20px">7</div><div class="row mono" style="left:55px;top:125px;line-height:20px">    <span class="op">nop</span></div>
<div class="row" style="left:0;top:144px;width:41px;text-align:right;font-size:16px;line-height:20px">8</div><div class="row mono" style="left:55px;top:145px;line-height:20px">    <span class="op">ret</span></div>
<div class="row" style="left:0;top:164px;width:41px;text-align:right;font-size:16px;line-height:20px">9</div><div class="row mono" style="left:55px;top:165px;line-height:20px">  }</div>
<div class="row" style="left:0;top:184px;width:41px;text-align:right;font-size:16px;line-height:20px">10</div><div class="row mono" style="left:55px;top:185px;line-height:20px"></div>
<div class="row" style="left:0;top:204px;width:41px;text-align:right;font-size:16px;line-height:20px">11</div><div class="row mono" style="left:55px;top:205px;line-height:20px">  <span class="kw">public static void</span> WriteLine()</div>
<div class="row" style="left:0;top:224px;width:41px;text-align:right;font-size:16px;line-height:20px">12</div><div class="row mono" style="left:55px;top:225px;line-height:20px">  {</div>
<div class="row" style="left:0;top:244px;width:41px;text-align:right;font-size:16px;line-height:20px">13</div><div class="row mono" style="left:55px;top:245px;line-height:20px">    <span class="kw">locals</span>: ConnectionProvider local_0,</div>
<div class="row" style="left:0;top:264px;width:41px;text-align:right;font-size:16px;line-height:20px">14</div><div class="row mono" style="left:55px;top:265px;line-height:20px">            <span class="kw">bool</span> local_1,</div>
<div class="row" style="left:0;top:284px;width:41px;text-align:right;font-size:16px;line-height:20px">15</div><div class="row mono" style="left:55px;top:285px;line-height:20px">            <span class="kw">bool</span> local_2,</div>
<div class="row" style="left:0;top:304px;width:41px;text-align:right;font-size:16px;line-height:20px">16</div><div class="row mono" style="left:55px;top:305px;line-height:20px">            <span class="kw">bool</span> local_3,</div>
<div class="row" style="left:0;top:324px;width:41px;text-align:right;font-size:16px;line-height:20px">17</div><div class="row mono" style="left:55px;top:325px;line-height:20px">            Entity2 local_4,</div>
<div class="row" style="left:0;top:344px;width:41px;text-align:right;font-size:16px;line-height:20px">18</div><div class="row mono" style="left:55px;top:345px;line-height:20px">            Entity7 local_5,</div>
<div class="row" style="left:0;top:364px;width:41px;text-align:right;font-size:16px;line-height:20px">19</div><div class="row mono" style="left:55px;top:365px;line-height:20px">            EntityResolver local_6,</div>
<div class="row" style="left:0;top:384px;width:41px;text-align:right;font-size:16px;line-height:20px">20</div><div class="row mono" style="left:55px;top:385px;line-height:20px">            <span class="kw">string</span> [] local_7,</div>
<div class="row" style="left:0;top:404px;width:41px;text-align:right;font-size:16px;line-height:20px">21</div><div class="row mono" style="left:55px;top:405px;line-height:20px">            <span class="kw">int</span> local_8,</div>
<div class="row" style="left:0;top:424px;width:41px;text-align:right;font-size:16px;line-height:20px">22</div><div class="row mono" style="left:55px;top:425px;line-height:20px">            <span class="kw">string</span> local_9,</div>
<div class="row" style="left:0;top:444px;width:41px;text-align:right;font-size:16px;line-height:20px">23</div><div class="row mono" style="left:55px;top:445px;line-height:20px">            <span class="kw">bool</span> local_10,</div>
<div class="row" style="left:0;top:464px;width:41px;text-align:right;font-size:16px;line-height:20px">24</div><div class="row mono" style="left:55px;top:465px;line-height:20px">            <span class="kw">bool</span> local_11,</div>
<div class="row" style="left:0;top:484px;width:41px;text-align:right;font-size:16px;line-height:20px">25</div><div class="row mono" style="left:55px;top:485px;line-height:20px">            <span class="kw">bool</span> local_12,</div>
<div class="row" style="left:0;top:504px;width:41px;text-align:right;font-size:16px;line-height:20px">26</div><div class="row mono" style="left:55px;top:505px;line-height:20px">            <span class="kw">bool</span> local_13,</div>
<div class="row" style="left:0;top:524px;width:41px;text-align:right;font-size:16px;line-height:20px">27</div><div class="row mono" style="left:55px;top:525px;line-height:20px">            Entity7 local_14,</div>
<div class="row" style="left:0;top:544px;width:41px;text-align:right;font-size:16px;line-height:20px">28</div><div class="row mono" style="left:55px;top:545px;line-height:20px">            <span class="kw">bool</span> local_15,</div>
<div class="row" style="left:0;top:564px;width:41px;text-align:right;font-size:16px;line-height:20px">29</div><div class="row mono" style="left:55px;top:565px;line-height:20px">            System.Exception local_16</div>
<div class="row" style="left:0;top:584px;width:41px;text-align:right;font-size:16px;line-height:20px">30</div><div class="row mono" style="left:55px;top:585px;line-height:20px"></div>
<div class="row" style="left:0;top:604px;width:41px;text-align:right;font-size:16px;line-height:20px">31</div><div class="row mono" style="left:55px;top:605px;line-height:20px">    <span class="op">nop</span></div>
<div class="row" style="left:0;top:624px;width:41px;text-align:right;font-size:16px;line-height:20px">32</div><div class="row mono" style="left:55px;top:625px;line-height:20px">    <span class="kw">try</span></div>
<div class="row" style="left:0;top:644px;width:41px;text-align:right;font-size:16px;line-height:20px">33</div><div class="row mono" style="left:55px;top:645px;line-height:20px">    {</div>
<div class="row" style="left:0;top:664px;width:41px;text-align:right;font-size:16px;line-height:20px">34</div><div class="row mono" style="left:55px;top:665px;line-height:20px">      <span class="op">nop</span></div>
</div>
<div class="sb" style="left:1819px;top:233px;width:22px;height:680px"></div><div class="th" style="left:1819px;top:257px;width:22px;height:100px"></div><svg class="abs" style="left:1819px;top:233px" width="22" height="680"><polyline points="6.7,15.0 11.0,10.0 15.3,15.0" fill="none" stroke="#555" stroke-width="1.900"/><polyline points="6.7,665.0 11.0,670.0 15.3,665.0" fill="none" stroke="#555" stroke-width="1.900"/></svg>
<div class="sb" style="left:715px;top:913px;width:1104px;height:23px"></div><div class="th" style="left:739px;top:913px;width:1057px;height:23px"></div><svg class="abs" style="left:715px;top:913px" width="1104" height="23"><polyline points="13.5,7.2 8.5,11.5 13.5,15.8" fill="none" stroke="#555" stroke-width="1.900"/><polyline points="1090.5,7.2 1095.5,11.5 1090.5,15.8" fill="none" stroke="#555" stroke-width="1.900"/></svg>
<div class="sb" style="left:1819px;top:913px;width:22px;height:23px"></div>
<div class="abs" style="left:10px;top:937px;width:1832px;height:1.500px;background:#fcfcfc"></div>
<div class="abs" style="left:10px;top:968px;width:1832px;height:3px;background:#f9fbfe"></div><div class="abs" style="left:1839px;top:940px;width:3px;height:31px;background:#f9fbfe"></div>
<div class="abs" style="left:14px;top:940px;width:2px;height:27px;background:repeating-linear-gradient(#f0f0f0 0 2px,#a4a4a4 2px 3.500px,#f0f0f0 3.500px 4px)"></div>
<div class="abs mono" style="left:24px;top:940px;width:1815px;height:28px;background:#fff;border:1px solid #909090;padding-left:5px;line-height:25px;color:#828282">Enter Python code here</div>
<div class="abs" id="wm" style="left:1388px;top:894.500px;font-family:'Liberation Sans','Noto Sans CJK SC',sans-serif;font-size:45px;font-weight:700;word-spacing:-7px;line-height:66px;color:#fff;white-space:nowrap;text-shadow:1.500px 1.500px 0 #000,2.500px 2.500px .4px #000;letter-spacing:2.623px">头条 @区块软件开发</div>
</body></html>
